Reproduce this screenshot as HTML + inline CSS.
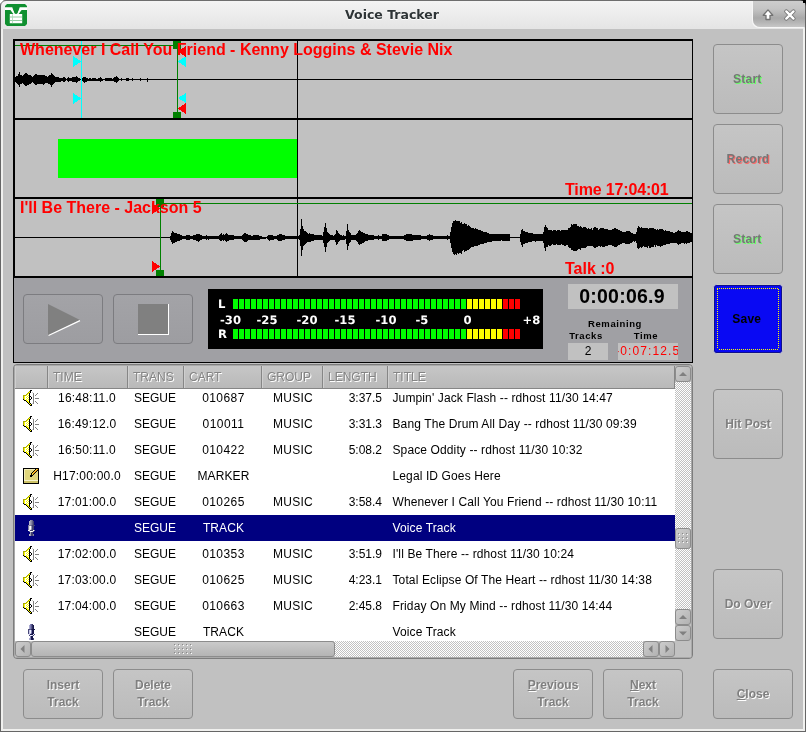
<!DOCTYPE html>
<html><head><meta charset="utf-8"><title>Voice Tracker</title>
<style>
html,body{margin:0;padding:0;}
body{width:806px;height:732px;overflow:hidden;background:#c1c1c1;position:relative;font-family:"Liberation Sans",sans-serif;}
.abs{position:absolute;}
#win{position:absolute;left:0;top:0;width:806px;height:732px;overflow:hidden;will-change:transform;}
#tbar{position:absolute;left:0;top:0;width:806px;height:29px;background:linear-gradient(#f5f5f5 0px,#f2f2f2 4px,#ececec 15px,#e5e5e5 28px);}
#tbar .topline{position:absolute;left:0;top:0;width:806px;height:1px;background:#6e6e6e;}
#ttl{position:absolute;left:0;top:6px;width:784px;text-align:center;font-family:"DejaVu Sans",sans-serif;font-weight:bold;font-size:12.5px;line-height:18px;color:#2e3436;text-shadow:0 1px 0 #fff;}
#tab{position:absolute;left:753px;top:1px;width:52px;height:26px;border-bottom-left-radius:7px;background:linear-gradient(#cdcdcd 0,#c4c4c4 8px,#a9a9a9 17px,#b4b4b4 21px,#c6c6c6 26px);box-shadow:-1px 1px 0 #f6f6f6;}
.bl{position:absolute;background:#666;}
.bw{position:absolute;background:#f0f0ee;}
.btn{position:absolute;box-sizing:border-box;border:1px solid #8c8c8c;border-radius:4px;background:linear-gradient(#c5c5c5,#bbbbbb);font-weight:bold;font-size:12px;color:#7f7f7f;text-align:center;text-shadow:1px 1px 0 #fff;}
.btn span{position:absolute;left:0;width:100%;text-align:center;line-height:14px;}
.row{position:absolute;left:15px;width:660px;height:26px;font-size:12px;line-height:26px;color:#000;white-space:nowrap;}
.row.sel{background:#000080;color:#fff;}
.row span{position:absolute;top:0;height:26px;}
.c{text-align:center;}
.hd{position:absolute;top:366px;height:23px;box-sizing:border-box;border-right:1px solid #868686;border-bottom:1px solid #868686;background:linear-gradient(#c6c6c6,#b9b9b9);font-size:12px;line-height:22px;color:#848484;text-shadow:1px 1px 0 #fff;padding-left:5px;box-shadow:inset 1px 0 0 #cfcfcf;}
.sb{position:absolute;width:16px;height:16px;box-sizing:border-box;border:1px solid #8c8c8c;border-radius:3px;background:linear-gradient(135deg,#cccccc,#b2b2b2);}
.chk{position:absolute;background-image:conic-gradient(#fff 25%,#c1c1c1 0 50%,#fff 0 75%,#c1c1c1 0);background-size:2px 2px;}
.red{position:absolute;color:#ff0000;font-weight:bold;font-size:16px;line-height:18px;white-space:nowrap;}
.lbl{position:absolute;font-weight:bold;font-size:9.5px;line-height:12px;color:#000;text-align:center;white-space:nowrap;letter-spacing:0.6px;}
</style></head>
<body>
<div id="win">
<div id="tbar"><div class="topline"></div>
<div id="tab"></div>
<div id="ttl">Voice Tracker</div>
<svg class="abs" style="left:5px;top:4px" width="22" height="22" viewBox="0 0 22 22">
<path d="M2 0H20L22 2V20L20 22H2L0 20V2Z" fill="#109030"/>
<path d="M0 3.3H7.4L10 9.6H12L14.6 3.3H22V6.1H16.6L13.6 10.1H17.2V19.2H4.8V10.1H8.4L5.4 6.1H0Z" fill="#fff"/>
<path d="M7.4 3.4H14.6L12.4 9.2Q11 10.4 9.6 9.2Z" fill="#109030"/>
<rect x="4.8" y="12.6" width="12.4" height="0.8" fill="#7cc08c"/>
<rect x="4.8" y="16" width="12.4" height="0.8" fill="#7cc08c"/>
<rect x="7.1" y="10.2" width="0.8" height="9" fill="#a8d8b4"/>
</svg>
<svg class="abs" style="left:760px;top:7px" width="40" height="16" viewBox="0 0 40 16">
<path d="M8 2.9L12.8 8.3H10V12.5H6V8.3H3.2Z" fill="#fff" stroke="#727272" stroke-width="1.3" stroke-linejoin="round"/>
<path d="M26.3 4.4L33.5 11.6M33.5 4.4L26.3 11.6" stroke="#707070" stroke-width="4.1" stroke-linecap="round" fill="none"/>
<path d="M26.3 4.4L33.5 11.6M33.5 4.4L26.3 11.6" stroke="#fff" stroke-width="2.4" stroke-linecap="round" fill="none"/>
</svg>
</div>
<div class="bl" style="left:0;top:0;width:1px;height:732px"></div>
<div class="bw" style="left:1px;top:29px;width:2px;height:702px"></div>
<div class="bl" style="left:805px;top:0;width:1px;height:732px"></div>
<div class="bw" style="left:803px;top:28px;width:2px;height:703px"></div>
<div class="bw" style="left:1px;top:729px;width:804px;height:2px"></div>
<div class="bl" style="left:0;top:731px;width:806px;height:1px"></div>
<div class="abs" style="left:0;top:0;width:3px;height:3px;background:#fff"></div>
<div class="abs" style="left:803px;top:0;width:3px;height:3px;background:#000"></div>
<svg class="abs" style="left:0;top:0" width="6" height="6"><path d="M0 6V0H6A6 6 0 0 0 0 6Z" fill="#fff"/><path d="M0.5 6A5.5 5.5 0 0 1 6 0.5" stroke="#6e6e6e" fill="none"/></svg>
<svg class="abs" style="left:800px;top:0" width="6" height="6"><path d="M6 6V0H0A6 6 0 0 1 6 6Z" fill="#000"/></svg>
<svg class="abs" style="left:0;top:0" width="806" height="370" viewBox="0 0 806 370" shape-rendering="crispEdges">
<rect x="14" y="278" width="678" height="84" fill="#a0a0a4"/>
<rect x="13" y="39" width="680" height="2" fill="#000"/>
<rect x="13" y="39" width="2" height="239" fill="#000"/>
<rect x="13" y="278" width="1" height="85" fill="#000"/>
<rect x="692" y="39" width="1" height="324" fill="#000"/>
<rect x="13" y="118" width="680" height="2" fill="#000"/>
<rect x="13" y="197" width="680" height="2" fill="#000"/>
<rect x="13" y="276" width="680" height="2" fill="#000"/>
<rect x="13" y="362" width="680" height="1" fill="#000"/>
<rect x="15" y="79" width="677" height="1" fill="#000"/>
<rect x="15" y="237" width="677" height="1" fill="#000"/>
<polygon points="15.0,76.6 16.0,76.6 16.0,75.9 17.0,75.9 17.0,75.5 18.0,75.5 18.0,74.0 19.0,74.0 19.0,72.2 20.0,72.2 20.0,74.9 21.0,74.9 21.0,75.1 22.0,75.1 22.0,75.8 23.0,75.8 23.0,74.9 24.0,74.9 24.0,74.4 25.0,74.4 25.0,73.2 26.0,73.2 26.0,72.5 27.0,72.5 27.0,74.2 28.0,74.2 28.0,74.7 29.0,74.7 29.0,75.1 30.0,75.1 30.0,74.9 31.0,74.9 31.0,75.7 32.0,75.7 32.0,76.8 33.0,76.8 33.0,75.6 34.0,75.6 34.0,75.2 35.0,75.2 35.0,74.1 36.0,74.1 36.0,74.0 37.0,74.0 37.0,74.9 38.0,74.9 38.0,75.0 39.0,75.0 39.0,75.1 40.0,75.1 40.0,75.1 41.0,75.1 41.0,75.1 42.0,75.1 42.0,74.8 43.0,74.8 43.0,74.5 44.0,74.5 44.0,74.8 45.0,74.8 45.0,75.7 46.0,75.7 46.0,76.1 47.0,76.1 47.0,76.5 48.0,76.5 48.0,75.5 49.0,75.5 49.0,75.0 50.0,75.0 50.0,74.5 51.0,74.5 51.0,72.8 52.0,72.8 52.0,73.6 53.0,73.6 53.0,75.1 54.0,75.1 54.0,76.1 55.0,76.1 55.0,76.7 56.0,76.7 56.0,76.9 57.0,76.9 57.0,77.0 58.0,77.0 58.0,77.0 59.0,77.0 59.0,77.5 60.0,77.5 60.0,77.6 61.0,77.6 61.0,77.9 62.0,77.9 62.0,77.7 63.0,77.7 63.0,77.4 64.0,77.4 64.0,76.8 65.0,76.8 65.0,77.9 66.0,77.9 66.0,78.6 67.0,78.6 67.0,77.7 68.0,77.7 68.0,77.2 69.0,77.2 69.0,77.7 70.0,77.7 70.0,78.4 71.0,78.4 71.0,78.0 72.0,78.0 72.0,77.4 73.0,77.4 73.0,77.3 74.0,77.3 74.0,77.4 75.0,77.4 75.0,76.8 76.0,76.8 76.0,76.2 77.0,76.2 77.0,76.9 78.0,76.9 78.0,77.6 79.0,77.6 79.0,78.0 80.0,78.0 80.0,78.6 81.0,78.6 81.0,78.1 82.0,78.1 82.0,77.7 83.0,77.7 83.0,76.8 84.0,76.8 84.0,76.5 85.0,76.5 85.0,77.1 86.0,77.1 86.0,77.6 87.0,77.6 87.0,78.1 88.0,78.1 88.0,78.5 89.0,78.5 89.0,78.4 90.0,78.4 90.0,78.3 91.0,78.3 91.0,78.5 92.0,78.5 92.0,78.4 93.0,78.4 93.0,78.4 94.0,78.4 94.0,78.4 95.0,78.4 95.0,78.3 96.0,78.3 96.0,78.5 97.0,78.5 97.0,78.5 98.0,78.5 98.0,78.4 99.0,78.4 99.0,78.0 100.0,78.0 100.0,77.2 101.0,77.2 101.0,77.8 102.0,77.8 102.0,78.5 103.0,78.5 103.0,78.6 104.0,78.6 104.0,78.6 105.0,78.6 105.0,78.1 106.0,78.1 106.0,78.1 107.0,78.1 107.0,77.9 108.0,77.9 108.0,77.9 109.0,77.9 109.0,77.9 110.0,77.9 110.0,78.1 111.0,78.1 111.0,78.1 112.0,78.1 112.0,78.5 113.0,78.5 113.0,78.2 114.0,78.2 114.0,77.4 115.0,77.4 115.0,77.3 116.0,77.3 116.0,76.4 117.0,76.4 117.0,77.2 118.0,77.2 118.0,78.4 119.0,78.4 119.0,78.9 120.0,78.9 120.0,78.8 121.0,78.8 121.0,78.1 122.0,78.1 122.0,78.9 123.0,78.9 123.0,78.9 124.0,78.9 124.0,78.9 125.0,78.9 125.0,78.9 126.0,78.9 126.0,78.0 127.0,78.0 127.0,77.8 128.0,77.8 128.0,78.4 129.0,78.4 129.0,78.8 130.0,78.8 130.0,78.9 131.0,78.9 131.0,78.9 132.0,78.9 132.0,78.0 133.0,78.0 133.0,78.9 134.0,78.9 134.0,78.9 135.0,78.9 135.0,78.9 136.0,78.9 136.0,78.9 137.0,78.9 137.0,78.9 138.0,78.9 138.0,78.9 139.0,78.9 139.0,78.9 140.0,78.9 140.0,78.1 141.0,78.1 141.0,78.9 142.0,78.9 142.0,78.9 143.0,78.9 143.0,79.0 144.0,79.0 144.0,78.9 145.0,78.9 145.0,78.9 146.0,78.9 146.0,78.9 147.0,78.9 147.0,77.6 148.0,77.6 148.0,78.9 149.0,78.9 149.0,79.0 150.0,79.0 150.0,80.0 149.0,80.0 149.0,80.1 148.0,80.1 148.0,81.5 147.0,81.5 147.0,80.1 146.0,80.1 146.0,80.1 145.0,80.1 145.0,80.1 144.0,80.1 144.0,80.1 143.0,80.1 143.0,80.1 142.0,80.1 142.0,80.1 141.0,80.1 141.0,80.9 140.0,80.9 140.0,80.1 139.0,80.1 139.0,80.1 138.0,80.1 138.0,80.1 137.0,80.1 137.0,80.1 136.0,80.1 136.0,80.1 135.0,80.1 135.0,80.1 134.0,80.1 134.0,80.1 133.0,80.1 133.0,80.9 132.0,80.9 132.0,80.1 131.0,80.1 131.0,80.1 130.0,80.1 130.0,80.2 129.0,80.2 129.0,80.6 128.0,80.6 128.0,81.3 127.0,81.3 127.0,81.1 126.0,81.1 126.0,80.1 125.0,80.1 125.0,80.2 124.0,80.2 124.0,80.0 123.0,80.0 123.0,80.1 122.0,80.1 122.0,80.9 121.0,80.9 121.0,80.1 120.0,80.1 120.0,80.1 119.0,80.1 119.0,80.7 118.0,80.7 118.0,81.8 117.0,81.8 117.0,82.7 116.0,82.7 116.0,81.8 115.0,81.8 115.0,81.6 114.0,81.6 114.0,80.8 113.0,80.8 113.0,80.6 112.0,80.6 112.0,80.9 111.0,80.9 111.0,80.9 110.0,80.9 110.0,81.1 109.0,81.1 109.0,81.2 108.0,81.2 108.0,81.1 107.0,81.1 107.0,81.0 106.0,81.0 106.0,80.8 105.0,80.8 105.0,80.3 104.0,80.3 104.0,80.4 103.0,80.4 103.0,80.5 102.0,80.5 102.0,81.3 101.0,81.3 101.0,82.0 100.0,82.0 100.0,81.0 99.0,81.0 99.0,80.6 98.0,80.6 98.0,80.6 97.0,80.6 97.0,80.5 96.0,80.5 96.0,80.7 95.0,80.7 95.0,80.7 94.0,80.7 94.0,80.6 93.0,80.6 93.0,80.6 92.0,80.6 92.0,80.5 91.0,80.5 91.0,80.6 90.0,80.6 90.0,80.5 89.0,80.5 89.0,80.5 88.0,80.5 88.0,80.9 87.0,80.9 87.0,81.5 86.0,81.5 86.0,81.8 85.0,81.8 85.0,82.5 84.0,82.5 84.0,82.1 83.0,82.1 83.0,81.4 82.0,81.4 82.0,80.9 81.0,80.9 81.0,80.4 80.0,80.4 80.0,80.9 79.0,80.9 79.0,81.3 78.0,81.3 78.0,81.9 77.0,81.9 77.0,82.9 76.0,82.9 76.0,82.2 75.0,82.2 75.0,81.7 74.0,81.7 74.0,81.7 73.0,81.7 73.0,81.5 72.0,81.5 72.0,81.0 71.0,81.0 71.0,80.6 70.0,80.6 70.0,81.3 69.0,81.3 69.0,81.8 68.0,81.8 68.0,81.3 67.0,81.3 67.0,80.4 66.0,80.4 66.0,81.1 65.0,81.1 65.0,82.1 64.0,82.1 64.0,81.7 63.0,81.7 63.0,81.2 62.0,81.2 62.0,81.2 61.0,81.2 61.0,81.5 60.0,81.5 60.0,81.5 59.0,81.5 59.0,82.1 58.0,82.1 58.0,82.0 57.0,82.0 57.0,82.2 56.0,82.2 56.0,82.2 55.0,82.2 55.0,82.9 54.0,82.9 54.0,84.0 53.0,84.0 53.0,85.2 52.0,85.2 52.0,86.5 51.0,86.5 51.0,84.6 50.0,84.6 50.0,84.1 49.0,84.1 49.0,83.7 48.0,83.7 48.0,82.5 47.0,82.5 47.0,82.9 46.0,82.9 46.0,83.2 45.0,83.2 45.0,84.3 44.0,84.3 44.0,84.6 43.0,84.6 43.0,84.1 42.0,84.1 42.0,84.0 41.0,84.0 41.0,83.7 40.0,83.7 40.0,83.9 39.0,83.9 39.0,84.2 38.0,84.2 38.0,84.1 37.0,84.1 37.0,85.1 36.0,85.1 36.0,84.8 35.0,84.8 35.0,83.9 34.0,83.9 34.0,83.4 33.0,83.4 33.0,82.2 32.0,82.2 32.0,83.1 31.0,83.1 31.0,84.1 30.0,84.1 30.0,84.0 29.0,84.0 29.0,84.5 28.0,84.5 28.0,84.6 27.0,84.6 27.0,86.3 26.0,86.3 26.0,85.5 25.0,85.5 25.0,84.5 24.0,84.5 24.0,84.3 23.0,84.3 23.0,83.1 22.0,83.1 22.0,84.1 21.0,84.1 21.0,83.9 20.0,83.9 20.0,86.7 19.0,86.7 19.0,85.0 18.0,85.0 18.0,83.5 17.0,83.5 17.0,83.0 16.0,83.0 16.0,82.3 15.0,82.3" fill="#000"/>
<polygon points="169.0,237.0 170.0,237.0 170.0,235.5 171.0,235.5 171.0,233.0 172.0,233.0 172.0,230.9 173.0,230.9 173.0,231.7 174.0,231.7 174.0,232.5 175.0,232.5 175.0,233.0 176.0,233.0 176.0,233.4 177.0,233.4 177.0,233.7 178.0,233.7 178.0,234.3 179.0,234.3 179.0,234.3 180.0,234.3 180.0,234.7 181.0,234.7 181.0,235.1 182.0,235.1 182.0,235.6 183.0,235.6 183.0,235.7 184.0,235.7 184.0,236.1 185.0,236.1 185.0,235.7 186.0,235.7 186.0,235.4 187.0,235.4 187.0,235.3 188.0,235.3 188.0,234.9 189.0,234.9 189.0,235.0 190.0,235.0 190.0,235.6 191.0,235.6 191.0,235.7 192.0,235.7 192.0,236.1 193.0,236.1 193.0,235.4 194.0,235.4 194.0,235.0 195.0,235.0 195.0,234.7 196.0,234.7 196.0,233.9 197.0,233.9 197.0,233.7 198.0,233.7 198.0,233.6 199.0,233.6 199.0,234.2 200.0,234.2 200.0,234.8 201.0,234.8 201.0,235.4 202.0,235.4 202.0,235.8 203.0,235.8 203.0,236.2 204.0,236.2 204.0,236.4 205.0,236.4 205.0,236.3 206.0,236.3 206.0,235.4 207.0,235.4 207.0,236.3 208.0,236.3 208.0,235.6 209.0,235.6 209.0,236.3 210.0,236.3 210.0,236.4 211.0,236.4 211.0,236.4 212.0,236.4 212.0,236.3 213.0,236.3 213.0,236.3 214.0,236.3 214.0,236.3 215.0,236.3 215.0,236.3 216.0,236.3 216.0,236.4 217.0,236.4 217.0,236.4 218.0,236.4 218.0,236.3 219.0,236.3 219.0,234.9 220.0,234.9 220.0,234.1 221.0,234.1 221.0,233.4 222.0,233.4 222.0,234.6 223.0,234.6 223.0,234.4 224.0,234.4 224.0,234.6 225.0,234.6 225.0,233.8 226.0,233.8 226.0,233.3 227.0,233.3 227.0,234.0 228.0,234.0 228.0,234.5 229.0,234.5 229.0,234.8 230.0,234.8 230.0,235.3 231.0,235.3 231.0,235.0 232.0,235.0 232.0,234.9 233.0,234.9 233.0,235.3 234.0,235.3 234.0,235.6 235.0,235.6 235.0,235.9 236.0,235.9 236.0,236.3 237.0,236.3 237.0,236.1 238.0,236.1 238.0,236.2 239.0,236.2 239.0,236.2 240.0,236.2 240.0,236.3 241.0,236.3 241.0,235.7 242.0,235.7 242.0,234.8 243.0,234.8 243.0,233.9 244.0,233.9 244.0,232.6 245.0,232.6 245.0,233.3 246.0,233.3 246.0,233.5 247.0,233.5 247.0,234.1 248.0,234.1 248.0,234.7 249.0,234.7 249.0,235.0 250.0,235.0 250.0,235.4 251.0,235.4 251.0,235.5 252.0,235.5 252.0,235.5 253.0,235.5 253.0,235.1 254.0,235.1 254.0,234.8 255.0,234.8 255.0,235.2 256.0,235.2 256.0,235.4 257.0,235.4 257.0,235.3 258.0,235.3 258.0,235.4 259.0,235.4 259.0,235.5 260.0,235.5 260.0,236.0 261.0,236.0 261.0,236.3 262.0,236.3 262.0,236.5 263.0,236.5 263.0,236.5 264.0,236.5 264.0,236.5 265.0,236.5 265.0,236.5 266.0,236.5 266.0,236.5 267.0,236.5 267.0,235.6 268.0,235.6 268.0,235.1 269.0,235.1 269.0,234.5 270.0,234.5 270.0,234.7 271.0,234.7 271.0,235.0 272.0,235.0 272.0,235.2 273.0,235.2 273.0,235.5 274.0,235.5 274.0,235.9 275.0,235.9 275.0,236.3 276.0,236.3 276.0,236.0 277.0,236.0 277.0,235.4 278.0,235.4 278.0,234.7 279.0,234.7 279.0,234.0 280.0,234.0 280.0,234.3 281.0,234.3 281.0,234.4 282.0,234.4 282.0,234.6 283.0,234.6 283.0,235.0 284.0,235.0 284.0,235.1 285.0,235.1 285.0,235.5 286.0,235.5 286.0,235.8 287.0,235.8 287.0,235.9 288.0,235.9 288.0,236.0 289.0,236.0 289.0,236.1 290.0,236.1 290.0,236.2 291.0,236.2 291.0,236.1 292.0,236.1 292.0,236.1 293.0,236.1 293.0,236.3 294.0,236.3 294.0,236.1 295.0,236.1 295.0,236.2 296.0,236.2 296.0,236.3 297.0,236.3 297.0,236.3 298.0,236.3 298.0,235.9 299.0,235.9 299.0,235.4 300.0,235.4 300.0,229.1 301.0,229.1 301.0,219.1 302.0,219.1 302.0,226.0 303.0,226.0 303.0,228.5 304.0,228.5 304.0,230.5 305.0,230.5 305.0,231.0 306.0,231.0 306.0,232.3 307.0,232.3 307.0,232.8 308.0,232.8 308.0,233.6 309.0,233.6 309.0,233.3 310.0,233.3 310.0,233.5 311.0,233.5 311.0,233.8 312.0,233.8 312.0,234.2 313.0,234.2 313.0,234.1 314.0,234.1 314.0,234.6 315.0,234.6 315.0,234.8 316.0,234.8 316.0,235.0 317.0,235.0 317.0,235.2 318.0,235.2 318.0,235.4 319.0,235.4 319.0,235.3 320.0,235.3 320.0,235.4 321.0,235.4 321.0,235.3 322.0,235.3 322.0,235.5 323.0,235.5 323.0,232.2 324.0,232.2 324.0,227.2 325.0,227.2 325.0,222.5 326.0,222.5 326.0,228.2 327.0,228.2 327.0,231.7 328.0,231.7 328.0,233.3 329.0,233.3 329.0,234.3 330.0,234.3 330.0,235.1 331.0,235.1 331.0,235.0 332.0,235.0 332.0,235.3 333.0,235.3 333.0,235.5 334.0,235.5 334.0,234.6 335.0,234.6 335.0,233.7 336.0,233.7 336.0,230.0 337.0,230.0 337.0,231.2 338.0,231.2 338.0,233.0 339.0,233.0 339.0,233.9 340.0,233.9 340.0,234.6 341.0,234.6 341.0,235.1 342.0,235.1 342.0,235.5 343.0,235.5 343.0,235.4 344.0,235.4 344.0,235.5 345.0,235.5 345.0,235.5 346.0,235.5 346.0,230.9 347.0,230.9 347.0,224.2 348.0,224.2 348.0,229.5 349.0,229.5 349.0,231.7 350.0,231.7 350.0,233.4 351.0,233.4 351.0,234.5 352.0,234.5 352.0,234.8 353.0,234.8 353.0,235.4 354.0,235.4 354.0,235.4 355.0,235.4 355.0,234.9 356.0,234.9 356.0,234.0 357.0,234.0 357.0,233.1 358.0,233.1 358.0,231.2 359.0,231.2 359.0,229.5 360.0,229.5 360.0,231.1 361.0,231.1 361.0,231.5 362.0,231.5 362.0,231.8 363.0,231.8 363.0,232.6 364.0,232.6 364.0,233.3 365.0,233.3 365.0,234.1 366.0,234.1 366.0,234.2 367.0,234.2 367.0,234.2 368.0,234.2 368.0,234.7 369.0,234.7 369.0,234.6 370.0,234.6 370.0,235.0 371.0,235.0 371.0,235.0 372.0,235.0 372.0,235.2 373.0,235.2 373.0,235.3 374.0,235.3 374.0,235.6 375.0,235.6 375.0,235.8 376.0,235.8 376.0,236.2 377.0,236.2 377.0,236.3 378.0,236.3 378.0,235.2 379.0,235.2 379.0,236.3 380.0,236.3 380.0,236.2 381.0,236.2 381.0,236.0 382.0,236.0 382.0,234.4 383.0,234.4 383.0,234.3 384.0,234.3 384.0,234.0 385.0,234.0 385.0,234.1 386.0,234.1 386.0,234.4 387.0,234.4 387.0,234.9 388.0,234.9 388.0,235.2 389.0,235.2 389.0,235.6 390.0,235.6 390.0,236.2 391.0,236.2 391.0,236.2 392.0,236.2 392.0,236.2 393.0,236.2 393.0,236.3 394.0,236.3 394.0,236.3 395.0,236.3 395.0,236.4 396.0,236.4 396.0,236.3 397.0,236.3 397.0,236.4 398.0,236.4 398.0,236.4 399.0,236.4 399.0,236.2 400.0,236.2 400.0,236.3 401.0,236.3 401.0,236.2 402.0,236.2 402.0,236.4 403.0,236.4 403.0,235.6 404.0,235.6 404.0,234.9 405.0,234.9 405.0,234.5 406.0,234.5 406.0,234.1 407.0,234.1 407.0,234.3 408.0,234.3 408.0,234.3 409.0,234.3 409.0,234.1 410.0,234.1 410.0,234.2 411.0,234.2 411.0,234.1 412.0,234.1 412.0,234.5 413.0,234.5 413.0,234.7 414.0,234.7 414.0,235.1 415.0,235.1 415.0,234.8 416.0,234.8 416.0,234.9 417.0,234.9 417.0,234.6 418.0,234.6 418.0,234.7 419.0,234.7 419.0,234.7 420.0,234.7 420.0,235.2 421.0,235.2 421.0,235.6 422.0,235.6 422.0,235.8 423.0,235.8 423.0,236.0 424.0,236.0 424.0,236.0 425.0,236.0 425.0,236.1 426.0,236.1 426.0,235.9 427.0,235.9 427.0,235.3 428.0,235.3 428.0,235.0 429.0,235.0 429.0,234.1 430.0,234.1 430.0,234.6 431.0,234.6 431.0,234.9 432.0,234.9 432.0,235.3 433.0,235.3 433.0,235.9 434.0,235.9 434.0,236.1 435.0,236.1 435.0,236.3 436.0,236.3 436.0,236.3 437.0,236.3 437.0,236.3 438.0,236.3 438.0,236.4 439.0,236.4 439.0,236.3 440.0,236.3 440.0,236.4 441.0,236.4 441.0,236.3 442.0,236.3 442.0,236.2 443.0,236.2 443.0,236.3 444.0,236.3 444.0,236.4 445.0,236.4 445.0,236.1 446.0,236.1 446.0,236.1 447.0,236.1 447.0,235.3 448.0,235.3 448.0,236.1 449.0,236.1 449.0,235.9 450.0,235.9 450.0,232.3 451.0,232.3 451.0,227.4 452.0,227.4 452.0,223.0 453.0,223.0 453.0,221.1 454.0,221.1 454.0,220.8 455.0,220.8 455.0,220.3 456.0,220.3 456.0,221.2 457.0,221.2 457.0,221.2 458.0,221.2 458.0,220.8 459.0,220.8 459.0,220.9 460.0,220.9 460.0,222.6 461.0,222.6 461.0,222.1 462.0,222.1 462.0,224.1 463.0,224.1 463.0,224.2 464.0,224.2 464.0,223.1 465.0,223.1 465.0,223.7 466.0,223.7 466.0,224.4 467.0,224.4 467.0,225.7 468.0,225.7 468.0,224.9 469.0,224.9 469.0,225.8 470.0,225.8 470.0,226.9 471.0,226.9 471.0,227.5 472.0,227.5 472.0,227.8 473.0,227.8 473.0,227.6 474.0,227.6 474.0,228.8 475.0,228.8 475.0,228.3 476.0,228.3 476.0,229.1 477.0,229.1 477.0,229.0 478.0,229.0 478.0,230.2 479.0,230.2 479.0,230.2 480.0,230.2 480.0,230.4 481.0,230.4 481.0,231.2 482.0,231.2 482.0,231.3 483.0,231.3 483.0,231.7 484.0,231.7 484.0,232.0 485.0,232.0 485.0,232.3 486.0,232.3 486.0,232.2 487.0,232.2 487.0,232.8 488.0,232.8 488.0,232.8 489.0,232.8 489.0,233.5 490.0,233.5 490.0,233.5 491.0,233.5 491.0,233.7 492.0,233.7 492.0,233.7 493.0,233.7 493.0,234.1 494.0,234.1 494.0,233.8 495.0,233.8 495.0,234.2 496.0,234.2 496.0,234.1 497.0,234.1 497.0,234.3 498.0,234.3 498.0,234.2 499.0,234.2 499.0,234.4 500.0,234.4 500.0,234.2 501.0,234.2 501.0,234.4 502.0,234.4 502.0,234.1 503.0,234.1 503.0,234.3 504.0,234.3 504.0,234.1 505.0,234.1 505.0,234.1 506.0,234.1 506.0,234.2 507.0,234.2 507.0,234.2 508.0,234.2 508.0,234.3 509.0,234.3 509.0,234.2 510.0,234.2 510.0,236.8 511.0,236.8 511.0,236.8 512.0,236.8 512.0,236.8 513.0,236.8 513.0,236.8 514.0,236.8 514.0,236.8 515.0,236.8 515.0,236.8 516.0,236.8 516.0,236.8 517.0,236.8 517.0,236.8 518.0,236.8 518.0,236.8 519.0,236.8 519.0,236.8 520.0,236.8 520.0,233.5 521.0,233.5 521.0,229.6 522.0,229.6 522.0,228.6 523.0,228.6 523.0,230.5 524.0,230.5 524.0,230.8 525.0,230.8 525.0,231.5 526.0,231.5 526.0,231.9 527.0,231.9 527.0,232.4 528.0,232.4 528.0,232.8 529.0,232.8 529.0,232.8 530.0,232.8 530.0,232.9 531.0,232.9 531.0,233.2 532.0,233.2 532.0,233.4 533.0,233.4 533.0,233.6 534.0,233.6 534.0,233.5 535.0,233.5 535.0,233.7 536.0,233.7 536.0,233.9 537.0,233.9 537.0,234.3 538.0,234.3 538.0,234.3 539.0,234.3 539.0,234.2 540.0,234.2 540.0,234.4 541.0,234.4 541.0,234.4 542.0,234.4 542.0,233.8 543.0,233.8 543.0,232.2 544.0,232.2 544.0,227.1 545.0,227.1 545.0,225.0 546.0,225.0 546.0,227.4 547.0,227.4 547.0,228.0 548.0,228.0 548.0,229.6 549.0,229.6 549.0,229.8 550.0,229.8 550.0,229.5 551.0,229.5 551.0,230.4 552.0,230.4 552.0,230.6 553.0,230.6 553.0,230.2 554.0,230.2 554.0,230.0 555.0,230.0 555.0,230.4 556.0,230.4 556.0,230.9 557.0,230.9 557.0,230.4 558.0,230.4 558.0,230.2 559.0,230.2 559.0,230.0 560.0,230.0 560.0,230.6 561.0,230.6 561.0,230.4 562.0,230.4 562.0,230.0 563.0,230.0 563.0,229.8 564.0,229.8 564.0,229.9 565.0,229.9 565.0,229.6 566.0,229.6 566.0,229.5 567.0,229.5 567.0,229.6 568.0,229.6 568.0,228.1 569.0,228.1 569.0,227.5 570.0,227.5 570.0,226.6 571.0,226.6 571.0,224.2 572.0,224.2 572.0,224.6 573.0,224.6 573.0,223.5 574.0,223.5 574.0,223.9 575.0,223.9 575.0,223.8 576.0,223.8 576.0,224.2 577.0,224.2 577.0,225.5 578.0,225.5 578.0,225.8 579.0,225.8 579.0,226.5 580.0,226.5 580.0,225.7 581.0,225.7 581.0,226.7 582.0,226.7 582.0,227.5 583.0,227.5 583.0,227.0 584.0,227.0 584.0,227.1 585.0,227.1 585.0,226.9 586.0,226.9 586.0,228.1 587.0,228.1 587.0,228.6 588.0,228.6 588.0,228.3 589.0,228.3 589.0,229.0 590.0,229.0 590.0,229.3 591.0,229.3 591.0,228.3 592.0,228.3 592.0,229.5 593.0,229.5 593.0,228.3 594.0,228.3 594.0,227.1 595.0,227.1 595.0,226.6 596.0,226.6 596.0,228.1 597.0,228.1 597.0,228.4 598.0,228.4 598.0,229.6 599.0,229.6 599.0,229.0 600.0,229.0 600.0,228.4 601.0,228.4 601.0,228.4 602.0,228.4 602.0,227.7 603.0,227.7 603.0,228.3 604.0,228.3 604.0,228.7 605.0,228.7 605.0,228.9 606.0,228.9 606.0,229.4 607.0,229.4 607.0,229.4 608.0,229.4 608.0,230.1 609.0,230.1 609.0,229.6 610.0,229.6 610.0,229.9 611.0,229.9 611.0,230.1 612.0,230.1 612.0,229.2 613.0,229.2 613.0,228.7 614.0,228.7 614.0,228.0 615.0,228.0 615.0,228.3 616.0,228.3 616.0,228.5 617.0,228.5 617.0,229.3 618.0,229.3 618.0,230.0 619.0,230.0 619.0,230.2 620.0,230.2 620.0,231.0 621.0,231.0 621.0,231.2 622.0,231.2 622.0,231.8 623.0,231.8 623.0,232.2 624.0,232.2 624.0,231.9 625.0,231.9 625.0,231.6 626.0,231.6 626.0,230.9 627.0,230.9 627.0,230.8 628.0,230.8 628.0,230.7 629.0,230.7 629.0,231.3 630.0,231.3 630.0,232.3 631.0,232.3 631.0,232.6 632.0,232.6 632.0,232.8 633.0,232.8 633.0,233.7 634.0,233.7 634.0,233.5 635.0,233.5 635.0,234.1 636.0,234.1 636.0,231.8 637.0,231.8 637.0,227.5 638.0,227.5 638.0,226.3 639.0,226.3 639.0,226.6 640.0,226.6 640.0,227.6 641.0,227.6 641.0,226.9 642.0,226.9 642.0,227.7 643.0,227.7 643.0,228.4 644.0,228.4 644.0,228.2 645.0,228.2 645.0,228.3 646.0,228.3 646.0,227.7 647.0,227.7 647.0,227.6 648.0,227.6 648.0,228.5 649.0,228.5 649.0,227.7 650.0,227.7 650.0,227.5 651.0,227.5 651.0,227.7 652.0,227.7 652.0,227.8 653.0,227.8 653.0,228.1 654.0,228.1 654.0,229.3 655.0,229.3 655.0,228.6 656.0,228.6 656.0,229.6 657.0,229.6 657.0,229.0 658.0,229.0 658.0,229.5 659.0,229.5 659.0,228.9 660.0,228.9 660.0,228.6 661.0,228.6 661.0,229.2 662.0,229.2 662.0,229.3 663.0,229.3 663.0,230.3 664.0,230.3 664.0,230.6 665.0,230.6 665.0,230.3 666.0,230.3 666.0,230.6 667.0,230.6 667.0,231.1 668.0,231.1 668.0,231.0 669.0,231.0 669.0,231.2 670.0,231.2 670.0,231.9 671.0,231.9 671.0,231.6 672.0,231.6 672.0,232.2 673.0,232.2 673.0,232.5 674.0,232.5 674.0,232.5 675.0,232.5 675.0,231.8 676.0,231.8 676.0,231.6 677.0,231.6 677.0,231.2 678.0,231.2 678.0,230.1 679.0,230.1 679.0,231.2 680.0,231.2 680.0,231.3 681.0,231.3 681.0,232.3 682.0,232.3 682.0,232.2 683.0,232.2 683.0,232.4 684.0,232.4 684.0,231.7 685.0,231.7 685.0,231.7 686.0,231.7 686.0,231.1 687.0,231.1 687.0,231.4 688.0,231.4 688.0,232.0 689.0,232.0 689.0,231.8 690.0,231.8 690.0,232.8 691.0,232.8 691.0,232.8 692.0,232.8 692.0,242.2 691.0,242.2 691.0,242.4 690.0,242.4 690.0,243.3 689.0,243.3 689.0,242.8 688.0,242.8 688.0,243.4 687.0,243.4 687.0,243.8 686.0,243.8 686.0,243.1 685.0,243.1 685.0,243.5 684.0,243.5 684.0,242.5 683.0,242.5 683.0,242.6 682.0,242.6 682.0,242.7 681.0,242.7 681.0,243.8 680.0,243.8 680.0,243.8 679.0,243.8 679.0,245.0 678.0,245.0 678.0,244.0 677.0,244.0 677.0,243.3 676.0,243.3 676.0,243.3 675.0,243.3 675.0,242.6 674.0,242.6 674.0,242.5 673.0,242.5 673.0,243.0 672.0,243.0 672.0,243.4 671.0,243.4 671.0,242.9 670.0,242.9 670.0,243.5 669.0,243.5 669.0,243.8 668.0,243.8 668.0,243.8 667.0,243.8 667.0,244.3 666.0,244.3 666.0,244.9 665.0,244.9 665.0,244.6 664.0,244.6 664.0,244.8 663.0,244.8 663.0,245.7 662.0,245.7 662.0,245.6 661.0,245.6 661.0,246.8 660.0,246.8 660.0,246.4 659.0,246.4 659.0,245.5 658.0,245.5 658.0,246.2 657.0,246.2 657.0,245.4 656.0,245.4 656.0,246.8 655.0,246.8 655.0,245.4 654.0,245.4 654.0,246.6 653.0,246.6 653.0,246.8 652.0,246.8 652.0,247.0 651.0,247.0 651.0,247.7 650.0,247.7 650.0,247.6 649.0,247.6 649.0,246.4 648.0,246.4 648.0,247.5 647.0,247.5 647.0,247.3 646.0,247.3 646.0,246.6 645.0,246.6 645.0,247.0 644.0,247.0 644.0,246.4 643.0,246.4 643.0,247.2 642.0,247.2 642.0,247.8 641.0,247.8 641.0,247.0 640.0,247.0 640.0,248.2 639.0,248.2 639.0,249.1 638.0,249.1 638.0,247.8 637.0,247.8 637.0,242.9 636.0,242.9 636.0,240.8 635.0,240.8 635.0,241.7 634.0,241.7 634.0,241.4 633.0,241.4 633.0,242.4 632.0,242.4 632.0,242.6 631.0,242.6 631.0,242.7 630.0,242.7 630.0,243.8 629.0,243.8 629.0,244.4 628.0,244.4 628.0,243.9 627.0,243.9 627.0,243.8 626.0,243.8 626.0,243.6 625.0,243.6 625.0,242.8 624.0,242.8 624.0,243.0 623.0,243.0 623.0,243.3 622.0,243.3 622.0,243.7 621.0,243.7 621.0,244.2 620.0,244.2 620.0,245.0 619.0,245.0 619.0,245.3 618.0,245.3 618.0,246.1 617.0,246.1 617.0,246.6 616.0,246.6 616.0,247.1 615.0,247.1 615.0,246.9 614.0,246.9 614.0,246.1 613.0,246.1 613.0,246.2 612.0,246.2 612.0,244.7 611.0,244.7 611.0,244.7 610.0,244.7 610.0,245.2 609.0,245.2 609.0,245.0 608.0,245.0 608.0,245.6 607.0,245.6 607.0,245.6 606.0,245.6 606.0,245.9 605.0,245.9 605.0,246.6 604.0,246.6 604.0,246.9 603.0,246.9 603.0,246.9 602.0,246.9 602.0,246.3 601.0,246.3 601.0,246.6 600.0,246.6 600.0,246.0 599.0,246.0 599.0,245.7 598.0,245.7 598.0,246.8 597.0,246.8 597.0,247.2 596.0,247.2 596.0,248.2 595.0,248.2 595.0,247.6 594.0,247.6 594.0,246.8 593.0,246.8 593.0,245.6 592.0,245.6 592.0,246.3 591.0,246.3 591.0,245.8 590.0,245.8 590.0,246.3 589.0,246.3 589.0,246.4 588.0,246.4 588.0,246.4 587.0,246.4 587.0,247.3 586.0,247.3 586.0,248.3 585.0,248.3 585.0,247.8 584.0,247.8 584.0,247.9 583.0,247.9 583.0,247.6 582.0,247.6 582.0,248.0 581.0,248.0 581.0,249.6 580.0,249.6 580.0,248.7 579.0,248.7 579.0,248.8 578.0,248.8 578.0,250.0 577.0,250.0 577.0,250.7 576.0,250.7 576.0,250.8 575.0,250.8 575.0,251.2 574.0,251.2 574.0,251.3 573.0,251.3 573.0,250.2 572.0,250.2 572.0,250.1 571.0,250.1 571.0,248.1 570.0,248.1 570.0,247.9 569.0,247.9 569.0,246.8 568.0,246.8 568.0,245.2 567.0,245.2 567.0,245.1 566.0,245.1 566.0,245.6 565.0,245.6 565.0,245.5 564.0,245.5 564.0,245.0 563.0,245.0 563.0,244.7 562.0,244.7 562.0,244.3 561.0,244.3 561.0,244.5 560.0,244.5 560.0,245.0 559.0,245.0 559.0,244.6 558.0,244.6 558.0,244.6 557.0,244.6 557.0,244.4 556.0,244.4 556.0,244.8 555.0,244.8 555.0,245.0 554.0,245.0 554.0,244.7 553.0,244.7 553.0,244.4 552.0,244.4 552.0,244.8 551.0,244.8 551.0,245.8 550.0,245.8 550.0,245.6 549.0,245.6 549.0,245.2 548.0,245.2 548.0,246.8 547.0,246.8 547.0,247.3 546.0,247.3 546.0,250.5 545.0,250.5 545.0,247.6 544.0,247.6 544.0,242.7 543.0,242.7 543.0,241.1 542.0,241.1 542.0,240.6 541.0,240.6 541.0,240.8 540.0,240.8 540.0,240.7 539.0,240.7 539.0,240.8 538.0,240.8 538.0,240.8 537.0,240.8 537.0,241.2 536.0,241.2 536.0,241.5 535.0,241.5 535.0,241.4 534.0,241.4 534.0,241.4 533.0,241.4 533.0,241.4 532.0,241.4 532.0,242.0 531.0,242.0 531.0,241.9 530.0,241.9 530.0,242.0 529.0,242.0 529.0,242.2 528.0,242.2 528.0,242.5 527.0,242.5 527.0,242.9 526.0,242.9 526.0,243.3 525.0,243.3 525.0,244.4 524.0,244.4 524.0,244.3 523.0,244.3 523.0,246.5 522.0,246.5 522.0,245.4 521.0,245.4 521.0,241.5 520.0,241.5 520.0,238.2 519.0,238.2 519.0,238.2 518.0,238.2 518.0,238.2 517.0,238.2 517.0,238.2 516.0,238.2 516.0,238.2 515.0,238.2 515.0,238.2 514.0,238.2 514.0,238.3 513.0,238.3 513.0,238.1 512.0,238.1 512.0,238.2 511.0,238.2 511.0,238.2 510.0,238.2 510.0,240.7 509.0,240.7 509.0,240.8 508.0,240.8 508.0,240.7 507.0,240.7 507.0,240.7 506.0,240.7 506.0,240.9 505.0,240.9 505.0,240.9 504.0,240.9 504.0,240.5 503.0,240.5 503.0,241.1 502.0,241.1 502.0,240.4 501.0,240.4 501.0,241.0 500.0,241.0 500.0,240.6 499.0,240.6 499.0,241.0 498.0,241.0 498.0,240.6 497.0,240.6 497.0,240.9 496.0,240.9 496.0,240.8 495.0,240.8 495.0,241.3 494.0,241.3 494.0,241.0 493.0,241.0 493.0,241.2 492.0,241.2 492.0,241.5 491.0,241.5 491.0,241.6 490.0,241.6 490.0,241.6 489.0,241.6 489.0,242.0 488.0,242.0 488.0,242.1 487.0,242.1 487.0,243.1 486.0,243.1 486.0,242.7 485.0,242.7 485.0,243.0 484.0,243.0 484.0,243.5 483.0,243.5 483.0,243.6 482.0,243.6 482.0,243.9 481.0,243.9 481.0,244.3 480.0,244.3 480.0,244.8 479.0,244.8 479.0,244.5 478.0,244.5 478.0,246.1 477.0,246.1 477.0,245.6 476.0,245.6 476.0,246.4 475.0,246.4 475.0,246.0 474.0,246.0 474.0,247.1 473.0,247.1 473.0,247.3 472.0,247.3 472.0,247.2 471.0,247.2 471.0,247.9 470.0,247.9 470.0,249.3 469.0,249.3 469.0,249.6 468.0,249.6 468.0,249.6 467.0,249.6 467.0,250.6 466.0,250.6 466.0,251.1 465.0,251.1 465.0,252.0 464.0,252.0 464.0,250.3 463.0,250.3 463.0,250.6 462.0,250.6 462.0,253.5 461.0,253.5 461.0,252.9 460.0,252.9 460.0,253.4 459.0,253.4 459.0,254.4 458.0,254.4 458.0,253.3 457.0,253.3 457.0,254.6 456.0,254.6 456.0,254.4 455.0,254.4 455.0,254.8 454.0,254.8 454.0,253.5 453.0,253.5 453.0,251.5 452.0,251.5 452.0,247.5 451.0,247.5 451.0,242.6 450.0,242.6 450.0,239.1 449.0,239.1 449.0,239.0 448.0,239.0 448.0,239.8 447.0,239.8 447.0,238.9 446.0,238.9 446.0,238.9 445.0,238.9 445.0,238.6 444.0,238.6 444.0,238.6 443.0,238.6 443.0,238.8 442.0,238.8 442.0,238.7 441.0,238.7 441.0,238.6 440.0,238.6 440.0,238.6 439.0,238.6 439.0,238.7 438.0,238.7 438.0,238.7 437.0,238.7 437.0,238.7 436.0,238.7 436.0,238.7 435.0,238.7 435.0,238.9 434.0,238.9 434.0,239.1 433.0,239.1 433.0,239.6 432.0,239.6 432.0,240.1 431.0,240.1 431.0,240.3 430.0,240.3 430.0,241.1 429.0,241.1 429.0,240.0 428.0,240.0 428.0,239.6 427.0,239.6 427.0,239.1 426.0,239.1 426.0,239.0 425.0,239.0 425.0,239.0 424.0,239.0 424.0,239.1 423.0,239.1 423.0,239.2 422.0,239.2 422.0,239.3 421.0,239.3 421.0,239.9 420.0,239.9 420.0,240.2 419.0,240.2 419.0,240.2 418.0,240.2 418.0,240.3 417.0,240.3 417.0,240.1 416.0,240.1 416.0,240.1 415.0,240.1 415.0,239.9 414.0,239.9 414.0,240.4 413.0,240.4 413.0,240.5 412.0,240.5 412.0,240.9 411.0,240.9 411.0,240.9 410.0,240.9 410.0,240.8 409.0,240.8 409.0,240.6 408.0,240.6 408.0,240.7 407.0,240.7 407.0,240.8 406.0,240.8 406.0,240.4 405.0,240.4 405.0,240.0 404.0,240.0 404.0,239.3 403.0,239.3 403.0,238.7 402.0,238.7 402.0,238.8 401.0,238.8 401.0,238.8 400.0,238.8 400.0,238.8 399.0,238.8 399.0,238.6 398.0,238.6 398.0,238.6 397.0,238.6 397.0,238.7 396.0,238.7 396.0,238.6 395.0,238.6 395.0,238.8 394.0,238.8 394.0,238.6 393.0,238.6 393.0,238.7 392.0,238.7 392.0,238.9 391.0,238.9 391.0,238.9 390.0,238.9 390.0,239.3 389.0,239.3 389.0,239.8 388.0,239.8 388.0,240.0 387.0,240.0 387.0,240.7 386.0,240.7 386.0,240.8 385.0,240.8 385.0,241.0 384.0,241.0 384.0,240.5 383.0,240.5 383.0,240.7 382.0,240.7 382.0,238.9 381.0,238.9 381.0,238.9 380.0,238.9 380.0,238.6 379.0,238.6 379.0,239.9 378.0,239.9 378.0,238.6 377.0,238.6 377.0,238.8 376.0,238.8 376.0,239.2 375.0,239.2 375.0,239.4 374.0,239.4 374.0,239.6 373.0,239.6 373.0,239.7 372.0,239.7 372.0,240.0 371.0,240.0 371.0,239.9 370.0,239.9 370.0,240.4 369.0,240.4 369.0,240.3 368.0,240.3 368.0,240.7 367.0,240.7 367.0,240.9 366.0,240.9 366.0,241.0 365.0,241.0 365.0,241.7 364.0,241.7 364.0,242.5 363.0,242.5 363.0,243.4 362.0,243.4 362.0,243.6 361.0,243.6 361.0,243.7 360.0,243.7 360.0,245.3 359.0,245.3 359.0,244.0 358.0,244.0 358.0,242.1 357.0,242.1 357.0,240.9 356.0,240.9 356.0,240.1 355.0,240.1 355.0,239.6 354.0,239.6 354.0,239.5 353.0,239.5 353.0,240.3 352.0,240.3 352.0,240.4 351.0,240.4 351.0,241.5 350.0,241.5 350.0,243.1 349.0,243.1 349.0,245.6 348.0,245.6 348.0,250.3 347.0,250.3 347.0,243.9 346.0,243.9 346.0,239.4 345.0,239.4 345.0,239.5 344.0,239.5 344.0,239.6 343.0,239.6 343.0,239.6 342.0,239.6 342.0,239.9 341.0,239.9 341.0,240.3 340.0,240.3 340.0,240.9 339.0,240.9 339.0,241.8 338.0,241.8 338.0,244.2 337.0,244.2 337.0,244.8 336.0,244.8 336.0,241.5 335.0,241.5 335.0,240.3 334.0,240.3 334.0,239.5 333.0,239.5 333.0,239.7 332.0,239.7 332.0,239.9 331.0,239.9 331.0,240.0 330.0,240.0 330.0,240.7 329.0,240.7 329.0,241.6 328.0,241.6 328.0,243.1 327.0,243.1 327.0,247.0 326.0,247.0 326.0,252.4 325.0,252.4 325.0,247.3 324.0,247.3 324.0,242.8 323.0,242.8 323.0,239.6 322.0,239.6 322.0,239.7 321.0,239.7 321.0,239.7 320.0,239.7 320.0,239.6 319.0,239.6 319.0,239.6 318.0,239.6 318.0,239.9 317.0,239.9 317.0,240.0 316.0,240.0 316.0,240.1 315.0,240.1 315.0,240.4 314.0,240.4 314.0,240.9 313.0,240.9 313.0,240.7 312.0,240.7 312.0,241.1 311.0,241.1 311.0,241.5 310.0,241.5 310.0,241.5 309.0,241.5 309.0,241.5 308.0,241.5 308.0,242.4 307.0,242.4 307.0,242.6 306.0,242.6 306.0,243.8 305.0,243.8 305.0,244.5 304.0,244.5 304.0,246.1 303.0,246.1 303.0,249.5 302.0,249.5 302.0,256.3 301.0,256.3 301.0,245.9 300.0,245.9 300.0,239.5 299.0,239.5 299.0,239.1 298.0,239.1 298.0,238.8 297.0,238.8 297.0,238.8 296.0,238.8 296.0,238.8 295.0,238.8 295.0,238.9 294.0,238.9 294.0,238.7 293.0,238.7 293.0,238.9 292.0,238.9 292.0,238.8 291.0,238.8 291.0,238.7 290.0,238.7 290.0,238.9 289.0,238.9 289.0,239.0 288.0,239.0 288.0,239.2 287.0,239.2 287.0,239.2 286.0,239.2 286.0,239.4 285.0,239.4 285.0,239.8 284.0,239.8 284.0,239.9 283.0,239.9 283.0,240.2 282.0,240.2 282.0,240.6 281.0,240.6 281.0,240.8 280.0,240.8 280.0,241.0 279.0,241.0 279.0,240.5 278.0,240.5 278.0,239.5 277.0,239.5 277.0,239.0 276.0,239.0 276.0,238.7 275.0,238.7 275.0,239.1 274.0,239.1 274.0,239.5 273.0,239.5 273.0,239.9 272.0,239.9 272.0,239.9 271.0,239.9 271.0,240.3 270.0,240.3 270.0,240.6 269.0,240.6 269.0,239.9 268.0,239.9 268.0,239.4 267.0,239.4 267.0,238.4 266.0,238.4 266.0,238.5 265.0,238.5 265.0,238.6 264.0,238.6 264.0,238.6 263.0,238.6 263.0,238.5 262.0,238.5 262.0,238.7 261.0,238.7 261.0,239.1 260.0,239.1 260.0,239.5 259.0,239.5 259.0,239.6 258.0,239.6 258.0,239.7 257.0,239.7 257.0,239.6 256.0,239.6 256.0,239.7 255.0,239.7 255.0,240.3 254.0,240.3 254.0,239.9 253.0,239.9 253.0,239.5 252.0,239.5 252.0,239.5 251.0,239.5 251.0,239.5 250.0,239.5 250.0,239.9 249.0,239.9 249.0,240.2 248.0,240.2 248.0,240.9 247.0,240.9 247.0,241.5 246.0,241.5 246.0,241.6 245.0,241.6 245.0,242.3 244.0,242.3 244.0,241.3 243.0,241.3 243.0,240.2 242.0,240.2 242.0,239.4 241.0,239.4 241.0,238.7 240.0,238.7 240.0,238.8 239.0,238.8 239.0,238.7 238.0,238.7 238.0,238.9 237.0,238.9 237.0,238.8 236.0,238.8 236.0,239.0 235.0,239.0 235.0,239.4 234.0,239.4 234.0,239.6 233.0,239.6 233.0,240.0 232.0,240.0 232.0,240.0 231.0,240.0 231.0,239.7 230.0,239.7 230.0,240.3 229.0,240.3 229.0,240.5 228.0,240.5 228.0,241.1 227.0,241.1 227.0,241.7 226.0,241.7 226.0,241.1 225.0,241.1 225.0,240.4 224.0,240.4 224.0,240.6 223.0,240.6 223.0,240.3 222.0,240.3 222.0,241.4 221.0,241.4 221.0,240.7 220.0,240.7 220.0,240.0 219.0,240.0 219.0,238.6 218.0,238.6 218.0,238.6 217.0,238.6 217.0,238.6 216.0,238.6 216.0,238.7 215.0,238.7 215.0,238.6 214.0,238.6 214.0,238.8 213.0,238.8 213.0,238.7 212.0,238.7 212.0,238.7 211.0,238.7 211.0,238.7 210.0,238.7 210.0,238.8 209.0,238.8 209.0,239.5 208.0,239.5 208.0,238.7 207.0,238.7 207.0,239.5 206.0,239.5 206.0,238.7 205.0,238.7 205.0,238.7 204.0,238.7 204.0,238.7 203.0,238.7 203.0,239.3 202.0,239.3 202.0,239.6 201.0,239.6 201.0,240.2 200.0,240.2 200.0,240.7 199.0,240.7 199.0,241.6 198.0,241.6 198.0,241.4 197.0,241.4 197.0,241.1 196.0,241.1 196.0,240.3 195.0,240.3 195.0,240.0 194.0,240.0 194.0,239.5 193.0,239.5 193.0,238.9 192.0,238.9 192.0,239.2 191.0,239.2 191.0,239.4 190.0,239.4 190.0,240.0 189.0,240.0 189.0,240.1 188.0,240.1 188.0,239.8 187.0,239.8 187.0,239.7 186.0,239.7 186.0,239.2 185.0,239.2 185.0,239.0 184.0,239.0 184.0,239.4 183.0,239.4 183.0,239.4 182.0,239.4 182.0,239.8 181.0,239.8 181.0,240.3 180.0,240.3 180.0,240.6 179.0,240.6 179.0,240.9 178.0,240.9 178.0,241.2 177.0,241.2 177.0,241.8 176.0,241.8 176.0,242.2 175.0,242.2 175.0,242.5 174.0,242.5 174.0,243.4 173.0,243.4 173.0,244.1 172.0,244.1 172.0,242.0 171.0,242.0 171.0,239.6 170.0,239.6 170.0,238.0 169.0,238.0" fill="#000"/>
<rect x="58" y="139" width="239" height="39" fill="#00ff00"/>
<rect x="297" y="41" width="1" height="235" fill="#000"/>
<rect x="81" y="41" width="1" height="77" fill="#00ffff"/>
<rect x="15" y="45" width="163" height="1" fill="#008000"/>
<rect x="177" y="41" width="1" height="77" fill="#008000"/>
<rect x="173" y="41" width="8" height="8" fill="#008000"/>
<rect x="173" y="112" width="8" height="6" fill="#008000"/>
<polygon points="73,56 73,67 81,61.5" fill="#00ffff"/>
<polygon points="73,93 73,104 81,98.5" fill="#00ffff"/>
<polygon points="186,56 186,67 178,61.5" fill="#00ffff"/>
<polygon points="186,93 186,103 178,98" fill="#00ffff"/>
<polygon points="186,46 186,57 178,51.5" fill="#ff0000"/>
<polygon points="186,103 186,114 178,108.5" fill="#ff0000"/>
<rect x="160" y="203" width="532" height="1" fill="#008000"/>
<rect x="160" y="199" width="1" height="77" fill="#008000"/>
<rect x="156" y="199" width="8" height="8" fill="#008000"/>
<rect x="156" y="270" width="8" height="6" fill="#008000"/>
<polygon points="152,203 152,214 160,208.5" fill="#ff0000"/>
<polygon points="152,261 152,272 160,266.5" fill="#ff0000"/>
</svg>
<div class="red" style="left:20px;top:41px">Whenever I Call You Friend - Kenny Loggins &amp; Stevie Nix</div>
<div class="red" style="left:20px;top:199px">I'll Be There - Jackson 5</div>
<div class="red" style="left:565px;top:181px;letter-spacing:-0.15px">Time 17:04:01</div>
<div class="red" style="left:565px;top:260px">Talk :0</div>
<div class="abs" style="left:23px;top:294px;width:80px;height:50px;box-sizing:border-box;border:1px solid #7c7c80;border-radius:4px;background:linear-gradient(#a3a3a7,#9d9da1)"></div>
<div class="abs" style="left:113px;top:294px;width:80px;height:50px;box-sizing:border-box;border:1px solid #7c7c80;border-radius:4px;background:linear-gradient(#a3a3a7,#9d9da1)"></div>
<svg class="abs" style="left:40px;top:298px" width="140" height="44" viewBox="40 298 140 44">
<polygon points="48,304 48,335.5 80,320" fill="#808080"/>
<path d="M48.5 335.5L80 320.6" stroke="#fff" stroke-width="1.2" fill="none"/>
<rect x="138" y="304" width="30" height="30" fill="#808080" shape-rendering="crispEdges"/>
<path d="M168.5 304V334.5H138" stroke="#fff" stroke-width="1" fill="none" shape-rendering="crispEdges"/>
</svg>
<svg class="abs" style="left:208px;top:289px" width="335" height="60" viewBox="208 289 335 60" shape-rendering="crispEdges"><rect x="208" y="289" width="335" height="60" fill="#000"/><rect x="233" y="299" width="5" height="10" fill="#00ff00"/><rect x="233" y="329" width="5" height="10" fill="#00ff00"/><rect x="239" y="299" width="5" height="10" fill="#00ff00"/><rect x="239" y="329" width="5" height="10" fill="#00ff00"/><rect x="245" y="299" width="5" height="10" fill="#00ff00"/><rect x="245" y="329" width="5" height="10" fill="#00ff00"/><rect x="251" y="299" width="5" height="10" fill="#00ff00"/><rect x="251" y="329" width="5" height="10" fill="#00ff00"/><rect x="257" y="299" width="5" height="10" fill="#00ff00"/><rect x="257" y="329" width="5" height="10" fill="#00ff00"/><rect x="263" y="299" width="5" height="10" fill="#00ff00"/><rect x="263" y="329" width="5" height="10" fill="#00ff00"/><rect x="269" y="299" width="5" height="10" fill="#00ff00"/><rect x="269" y="329" width="5" height="10" fill="#00ff00"/><rect x="275" y="299" width="5" height="10" fill="#00ff00"/><rect x="275" y="329" width="5" height="10" fill="#00ff00"/><rect x="281" y="299" width="5" height="10" fill="#00ff00"/><rect x="281" y="329" width="5" height="10" fill="#00ff00"/><rect x="287" y="299" width="5" height="10" fill="#00ff00"/><rect x="287" y="329" width="5" height="10" fill="#00ff00"/><rect x="293" y="299" width="5" height="10" fill="#00ff00"/><rect x="293" y="329" width="5" height="10" fill="#00ff00"/><rect x="299" y="299" width="5" height="10" fill="#00ff00"/><rect x="299" y="329" width="5" height="10" fill="#00ff00"/><rect x="305" y="299" width="5" height="10" fill="#00ff00"/><rect x="305" y="329" width="5" height="10" fill="#00ff00"/><rect x="311" y="299" width="5" height="10" fill="#00ff00"/><rect x="311" y="329" width="5" height="10" fill="#00ff00"/><rect x="317" y="299" width="5" height="10" fill="#00ff00"/><rect x="317" y="329" width="5" height="10" fill="#00ff00"/><rect x="323" y="299" width="5" height="10" fill="#00ff00"/><rect x="323" y="329" width="5" height="10" fill="#00ff00"/><rect x="329" y="299" width="5" height="10" fill="#00ff00"/><rect x="329" y="329" width="5" height="10" fill="#00ff00"/><rect x="335" y="299" width="5" height="10" fill="#00ff00"/><rect x="335" y="329" width="5" height="10" fill="#00ff00"/><rect x="341" y="299" width="5" height="10" fill="#00ff00"/><rect x="341" y="329" width="5" height="10" fill="#00ff00"/><rect x="347" y="299" width="5" height="10" fill="#00ff00"/><rect x="347" y="329" width="5" height="10" fill="#00ff00"/><rect x="353" y="299" width="5" height="10" fill="#00ff00"/><rect x="353" y="329" width="5" height="10" fill="#00ff00"/><rect x="359" y="299" width="5" height="10" fill="#00ff00"/><rect x="359" y="329" width="5" height="10" fill="#00ff00"/><rect x="365" y="299" width="5" height="10" fill="#00ff00"/><rect x="365" y="329" width="5" height="10" fill="#00ff00"/><rect x="371" y="299" width="5" height="10" fill="#00ff00"/><rect x="371" y="329" width="5" height="10" fill="#00ff00"/><rect x="377" y="299" width="5" height="10" fill="#00ff00"/><rect x="377" y="329" width="5" height="10" fill="#00ff00"/><rect x="383" y="299" width="5" height="10" fill="#00ff00"/><rect x="383" y="329" width="5" height="10" fill="#00ff00"/><rect x="389" y="299" width="5" height="10" fill="#00ff00"/><rect x="389" y="329" width="5" height="10" fill="#00ff00"/><rect x="395" y="299" width="5" height="10" fill="#00ff00"/><rect x="395" y="329" width="5" height="10" fill="#00ff00"/><rect x="401" y="299" width="5" height="10" fill="#00ff00"/><rect x="401" y="329" width="5" height="10" fill="#00ff00"/><rect x="407" y="299" width="5" height="10" fill="#00ff00"/><rect x="407" y="329" width="5" height="10" fill="#00ff00"/><rect x="413" y="299" width="5" height="10" fill="#00ff00"/><rect x="413" y="329" width="5" height="10" fill="#00ff00"/><rect x="419" y="299" width="5" height="10" fill="#00ff00"/><rect x="419" y="329" width="5" height="10" fill="#00ff00"/><rect x="425" y="299" width="5" height="10" fill="#00ff00"/><rect x="425" y="329" width="5" height="10" fill="#00ff00"/><rect x="431" y="299" width="5" height="10" fill="#00ff00"/><rect x="431" y="329" width="5" height="10" fill="#00ff00"/><rect x="437" y="299" width="5" height="10" fill="#00ff00"/><rect x="437" y="329" width="5" height="10" fill="#00ff00"/><rect x="443" y="299" width="5" height="10" fill="#00ff00"/><rect x="443" y="329" width="5" height="10" fill="#00ff00"/><rect x="449" y="299" width="5" height="10" fill="#00ff00"/><rect x="449" y="329" width="5" height="10" fill="#00ff00"/><rect x="455" y="299" width="5" height="10" fill="#00ff00"/><rect x="455" y="329" width="5" height="10" fill="#00ff00"/><rect x="461" y="299" width="5" height="10" fill="#00ff00"/><rect x="461" y="329" width="5" height="10" fill="#00ff00"/><rect x="467" y="299" width="5" height="10" fill="#ffff00"/><rect x="467" y="329" width="5" height="10" fill="#ffff00"/><rect x="473" y="299" width="5" height="10" fill="#ffff00"/><rect x="473" y="329" width="5" height="10" fill="#ffff00"/><rect x="479" y="299" width="5" height="10" fill="#ffff00"/><rect x="479" y="329" width="5" height="10" fill="#ffff00"/><rect x="485" y="299" width="5" height="10" fill="#ffff00"/><rect x="485" y="329" width="5" height="10" fill="#ffff00"/><rect x="491" y="299" width="5" height="10" fill="#ffff00"/><rect x="491" y="329" width="5" height="10" fill="#ffff00"/><rect x="497" y="299" width="5" height="10" fill="#ffff00"/><rect x="497" y="329" width="5" height="10" fill="#ffff00"/><rect x="503" y="299" width="5" height="10" fill="#ff0000"/><rect x="503" y="329" width="5" height="10" fill="#ff0000"/><rect x="509" y="299" width="5" height="10" fill="#ff0000"/><rect x="509" y="329" width="5" height="10" fill="#ff0000"/><rect x="515" y="299" width="5" height="10" fill="#ff0000"/><rect x="515" y="329" width="5" height="10" fill="#ff0000"/><g font-family="DejaVu Sans, sans-serif" font-weight="bold" font-size="11.6" fill="#fff" text-rendering="geometricPrecision"><text x="218" y="308.4">L</text><text x="218" y="338.4">R</text><text x="230.5" y="323.8" text-anchor="middle">-30</text><text x="267" y="323.8" text-anchor="middle">-25</text><text x="307" y="323.8" text-anchor="middle">-20</text><text x="345" y="323.8" text-anchor="middle">-15</text><text x="386" y="323.8" text-anchor="middle">-10</text><text x="422" y="323.8" text-anchor="middle">-5</text><text x="467.5" y="323.8" text-anchor="middle">0</text><text x="531.5" y="323.8" text-anchor="middle">+8</text></g></svg>
<div class="abs" style="left:568px;top:284px;width:110px;height:25px;background:#c1c1c1;text-align:center;font-weight:bold;font-size:19.5px;line-height:25px;color:#000;letter-spacing:0.25px;text-indent:-2px">0:00:06.9</div>
<div class="lbl" style="left:575px;top:318px;width:80px">Remaining</div>
<div class="lbl" style="left:556px;top:330px;width:60px">Tracks</div>
<div class="lbl" style="left:616px;top:330px;width:60px">Time</div>
<div class="abs" style="left:568px;top:343px;width:40px;height:17px;background:#c1c1c1;text-align:center;font-size:12px;line-height:17px;color:#000">2</div>
<div class="abs" style="left:618px;top:343px;width:60px;height:17px;background:#c1c1c1;overflow:hidden;color:#ff0000;font-size:12px;line-height:17px;white-space:nowrap;letter-spacing:1.1px"><span style="position:absolute;left:-2.8px;top:0">-0:07:12.5</span></div>
<div class="btn" style="left:713px;top:44px;width:70px;height:70px;color:#767676;text-shadow:1px 1px 0 #66ff66;letter-spacing:0.25px;text-indent:-1.5px"><span style="top:27.0px">Start</span></div>
<div class="btn" style="left:713px;top:124px;width:70px;height:70px;color:#767676;text-shadow:1px 1px 0 #ff6666;letter-spacing:0.25px"><span style="top:27.0px">Record</span></div>
<div class="btn" style="left:713px;top:204px;width:70px;height:70px;color:#767676;text-shadow:1px 1px 0 #66ff66;letter-spacing:0.25px;text-indent:-1.5px"><span style="top:27.0px">Start</span></div>
<div class="abs" style="left:713px;top:284px;width:70px;height:70px;box-sizing:border-box;border:1px solid #c8c8c8;border-radius:4px;background:#0909f3;"><div class="abs" style="left:0;top:0;width:66px;height:66px;border:1px solid #10108c;border-radius:3px;background:#0909f3"></div><svg class="abs" style="left:3px;top:3px" width="63" height="63" shape-rendering="crispEdges"><g stroke="#ffff00" stroke-width="1" stroke-dasharray="1 1" fill="none"><path d="M2 0.5H62M2 61.5H62M0.5 1V61M61.5 1V61"/></g><rect x="0" y="0" width="1" height="1" fill="#ffff00"/></svg><span class="abs" style="left:0;width:68px;top:27px;text-align:center;font-weight:bold;font-size:12px;line-height:14px;color:#000;letter-spacing:0.2px;text-indent:-2.5px">Save</span></div>
<div class="btn" style="left:713px;top:389px;width:70px;height:70px;"><span style="top:27.0px">Hit Post</span></div>
<div class="btn" style="left:713px;top:569px;width:70px;height:70px;"><span style="top:27.0px">Do Over</span></div>
<div class="btn" style="left:713px;top:669px;width:80px;height:50px;"><span style="top:17.0px"><u>C</u>lose</span></div>
<div class="btn" style="left:23px;top:669px;width:80px;height:50px;"><span style="top:7.5px">Insert</span><span style="top:24.5px">Track</span></div>
<div class="btn" style="left:113px;top:669px;width:80px;height:50px;"><span style="top:7.5px">Delete</span><span style="top:24.5px">Track</span></div>
<div class="btn" style="left:513px;top:669px;width:80px;height:50px;"><span style="top:7.5px"><u>P</u>revious</span><span style="top:24.5px">Track</span></div>
<div class="btn" style="left:603px;top:669px;width:80px;height:50px;"><span style="top:7.5px"><u>N</u>ext</span><span style="top:24.5px">Track</span></div>
<div class="abs" style="left:13px;top:364px;width:680px;height:295px;box-sizing:border-box;border:1px solid #7d7d7d;border-radius:4px;background:#b4b4b4"></div>
<div class="abs" style="left:14px;top:365px;width:678px;height:293px;box-sizing:border-box;border:1px solid #a9a9a9;border-radius:3px;background:#c1c1c1"></div>
<div class="abs" style="left:15px;top:389px;width:660px;height:252px;background:#fff"></div>
<div class="abs" style="left:0;top:389px;width:806px;height:252px;overflow:hidden">
<div class="row" style="top:-4px"><svg class="abs" style="left:8px;top:5px" width="16" height="16" viewBox="0 0 16 16" shape-rendering="crispEdges"><rect x="7" y="0" width="2" height="1" fill="#000"/><rect x="6" y="1" width="1" height="1" fill="#a8a800"/><rect x="7" y="1" width="1" height="1" fill="#000"/><rect x="8" y="1" width="1" height="1" fill="#ffffff"/><rect x="5" y="2" width="1" height="1" fill="#a8a800"/><rect x="6" y="2" width="1" height="1" fill="#ffff00"/><rect x="7" y="2" width="1" height="1" fill="#000"/><rect x="8" y="2" width="1" height="1" fill="#ffffff"/><rect x="9" y="2" width="1" height="1" fill="#d0d0d0"/><rect x="4" y="3" width="1" height="1" fill="#a8a800"/><rect x="5" y="3" width="1" height="1" fill="#ffff00"/><rect x="6" y="3" width="1" height="1" fill="#000"/><rect x="7" y="3" width="3" height="1" fill="#ffffff"/><rect x="10" y="3" width="1" height="1" fill="#808080"/><rect x="14" y="3" width="1" height="1" fill="#808080"/><rect x="3" y="4" width="1" height="1" fill="#a8a800"/><rect x="4" y="4" width="1" height="1" fill="#ffff00"/><rect x="5" y="4" width="1" height="1" fill="#ffffff"/><rect x="6" y="4" width="1" height="1" fill="#000"/><rect x="7" y="4" width="3" height="1" fill="#ffffff"/><rect x="10" y="4" width="1" height="1" fill="#808080"/><rect x="13" y="4" width="1" height="1" fill="#808080"/><rect x="0" y="5" width="3" height="1" fill="#a8a800"/><rect x="3" y="5" width="1" height="1" fill="#ffff00"/><rect x="4" y="5" width="1" height="1" fill="#ffffff"/><rect x="5" y="5" width="1" height="1" fill="#ffff00"/><rect x="6" y="5" width="1" height="1" fill="#000"/><rect x="7" y="5" width="3" height="1" fill="#ffffff"/><rect x="10" y="5" width="1" height="1" fill="#808080"/><rect x="12" y="5" width="1" height="1" fill="#808080"/><rect x="0" y="6" width="1" height="1" fill="#a8a800"/><rect x="1" y="6" width="1" height="1" fill="#ffff00"/><rect x="2" y="6" width="2" height="1" fill="#ffffff"/><rect x="4" y="6" width="1" height="1" fill="#ffff00"/><rect x="5" y="6" width="1" height="1" fill="#ffffff"/><rect x="6" y="6" width="2" height="1" fill="#000"/><rect x="8" y="6" width="2" height="1" fill="#ffffff"/><rect x="10" y="6" width="1" height="1" fill="#808080"/><rect x="0" y="7" width="1" height="1" fill="#a8a800"/><rect x="1" y="7" width="1" height="1" fill="#ffff00"/><rect x="2" y="7" width="1" height="1" fill="#ffffff"/><rect x="3" y="7" width="1" height="1" fill="#ffff00"/><rect x="4" y="7" width="1" height="1" fill="#ffffff"/><rect x="5" y="7" width="1" height="1" fill="#ffff00"/><rect x="6" y="7" width="1" height="1" fill="#000"/><rect x="7" y="7" width="1" height="1" fill="#ffffff"/><rect x="8" y="7" width="1" height="1" fill="#000"/><rect x="9" y="7" width="1" height="1" fill="#ffffff"/><rect x="10" y="7" width="1" height="1" fill="#808080"/><rect x="0" y="8" width="1" height="1" fill="#a8a800"/><rect x="1" y="8" width="1" height="1" fill="#ffff00"/><rect x="2" y="8" width="2" height="1" fill="#ffffff"/><rect x="4" y="8" width="1" height="1" fill="#ffff00"/><rect x="5" y="8" width="1" height="1" fill="#ffffff"/><rect x="6" y="8" width="1" height="1" fill="#000"/><rect x="7" y="8" width="1" height="1" fill="#ffffff"/><rect x="8" y="8" width="1" height="1" fill="#000"/><rect x="9" y="8" width="1" height="1" fill="#ffffff"/><rect x="10" y="8" width="1" height="1" fill="#808080"/><rect x="12" y="8" width="4" height="1" fill="#808080"/><rect x="0" y="9" width="1" height="1" fill="#000"/><rect x="1" y="9" width="1" height="1" fill="#ffff00"/><rect x="2" y="9" width="1" height="1" fill="#ffffff"/><rect x="3" y="9" width="1" height="1" fill="#ffff00"/><rect x="4" y="9" width="1" height="1" fill="#ffffff"/><rect x="5" y="9" width="1" height="1" fill="#ffff00"/><rect x="6" y="9" width="2" height="1" fill="#000"/><rect x="8" y="9" width="2" height="1" fill="#ffffff"/><rect x="10" y="9" width="1" height="1" fill="#808080"/><rect x="1" y="10" width="2" height="1" fill="#000"/><rect x="3" y="10" width="2" height="1" fill="#ffff00"/><rect x="5" y="10" width="1" height="1" fill="#ffffff"/><rect x="6" y="10" width="1" height="1" fill="#000"/><rect x="7" y="10" width="3" height="1" fill="#ffffff"/><rect x="10" y="10" width="1" height="1" fill="#808080"/><rect x="3" y="11" width="1" height="1" fill="#000"/><rect x="4" y="11" width="2" height="1" fill="#ffff00"/><rect x="6" y="11" width="1" height="1" fill="#000"/><rect x="7" y="11" width="3" height="1" fill="#ffffff"/><rect x="10" y="11" width="1" height="1" fill="#808080"/><rect x="12" y="11" width="1" height="1" fill="#808080"/><rect x="4" y="12" width="1" height="1" fill="#000"/><rect x="5" y="12" width="1" height="1" fill="#ffff00"/><rect x="6" y="12" width="1" height="1" fill="#000"/><rect x="7" y="12" width="3" height="1" fill="#ffffff"/><rect x="10" y="12" width="1" height="1" fill="#808080"/><rect x="13" y="12" width="1" height="1" fill="#808080"/><rect x="5" y="13" width="1" height="1" fill="#000"/><rect x="6" y="13" width="1" height="1" fill="#ffff00"/><rect x="7" y="13" width="1" height="1" fill="#000"/><rect x="8" y="13" width="1" height="1" fill="#ffffff"/><rect x="9" y="13" width="1" height="1" fill="#d0d0d0"/><rect x="10" y="13" width="1" height="1" fill="#808080"/><rect x="14" y="13" width="1" height="1" fill="#808080"/><rect x="6" y="14" width="1" height="1" fill="#000"/><rect x="7" y="14" width="1" height="1" fill="#ffff00"/><rect x="8" y="14" width="1" height="1" fill="#000"/><rect x="7" y="15" width="2" height="1" fill="#000"/></svg><span class="c" style="left:32px;width:80px;letter-spacing:0.2px">16:48:11.0</span><span class="c" style="left:112px;width:56px">SEGUE</span><span class="c" style="left:169.5px;width:78px;letter-spacing:0.45px">010687</span><span class="c" style="left:247.5px;width:61px;letter-spacing:0.3px">MUSIC</span><span style="left:307px;width:60px;text-align:right">3:37.5</span><span style="left:377.5px;letter-spacing:0.12px">Jumpin' Jack Flash -- rdhost 11/30 14:47</span></div>
<div class="row" style="top:22px"><svg class="abs" style="left:8px;top:5px" width="16" height="16" viewBox="0 0 16 16" shape-rendering="crispEdges"><rect x="7" y="0" width="2" height="1" fill="#000"/><rect x="6" y="1" width="1" height="1" fill="#a8a800"/><rect x="7" y="1" width="1" height="1" fill="#000"/><rect x="8" y="1" width="1" height="1" fill="#ffffff"/><rect x="5" y="2" width="1" height="1" fill="#a8a800"/><rect x="6" y="2" width="1" height="1" fill="#ffff00"/><rect x="7" y="2" width="1" height="1" fill="#000"/><rect x="8" y="2" width="1" height="1" fill="#ffffff"/><rect x="9" y="2" width="1" height="1" fill="#d0d0d0"/><rect x="4" y="3" width="1" height="1" fill="#a8a800"/><rect x="5" y="3" width="1" height="1" fill="#ffff00"/><rect x="6" y="3" width="1" height="1" fill="#000"/><rect x="7" y="3" width="3" height="1" fill="#ffffff"/><rect x="10" y="3" width="1" height="1" fill="#808080"/><rect x="14" y="3" width="1" height="1" fill="#808080"/><rect x="3" y="4" width="1" height="1" fill="#a8a800"/><rect x="4" y="4" width="1" height="1" fill="#ffff00"/><rect x="5" y="4" width="1" height="1" fill="#ffffff"/><rect x="6" y="4" width="1" height="1" fill="#000"/><rect x="7" y="4" width="3" height="1" fill="#ffffff"/><rect x="10" y="4" width="1" height="1" fill="#808080"/><rect x="13" y="4" width="1" height="1" fill="#808080"/><rect x="0" y="5" width="3" height="1" fill="#a8a800"/><rect x="3" y="5" width="1" height="1" fill="#ffff00"/><rect x="4" y="5" width="1" height="1" fill="#ffffff"/><rect x="5" y="5" width="1" height="1" fill="#ffff00"/><rect x="6" y="5" width="1" height="1" fill="#000"/><rect x="7" y="5" width="3" height="1" fill="#ffffff"/><rect x="10" y="5" width="1" height="1" fill="#808080"/><rect x="12" y="5" width="1" height="1" fill="#808080"/><rect x="0" y="6" width="1" height="1" fill="#a8a800"/><rect x="1" y="6" width="1" height="1" fill="#ffff00"/><rect x="2" y="6" width="2" height="1" fill="#ffffff"/><rect x="4" y="6" width="1" height="1" fill="#ffff00"/><rect x="5" y="6" width="1" height="1" fill="#ffffff"/><rect x="6" y="6" width="2" height="1" fill="#000"/><rect x="8" y="6" width="2" height="1" fill="#ffffff"/><rect x="10" y="6" width="1" height="1" fill="#808080"/><rect x="0" y="7" width="1" height="1" fill="#a8a800"/><rect x="1" y="7" width="1" height="1" fill="#ffff00"/><rect x="2" y="7" width="1" height="1" fill="#ffffff"/><rect x="3" y="7" width="1" height="1" fill="#ffff00"/><rect x="4" y="7" width="1" height="1" fill="#ffffff"/><rect x="5" y="7" width="1" height="1" fill="#ffff00"/><rect x="6" y="7" width="1" height="1" fill="#000"/><rect x="7" y="7" width="1" height="1" fill="#ffffff"/><rect x="8" y="7" width="1" height="1" fill="#000"/><rect x="9" y="7" width="1" height="1" fill="#ffffff"/><rect x="10" y="7" width="1" height="1" fill="#808080"/><rect x="0" y="8" width="1" height="1" fill="#a8a800"/><rect x="1" y="8" width="1" height="1" fill="#ffff00"/><rect x="2" y="8" width="2" height="1" fill="#ffffff"/><rect x="4" y="8" width="1" height="1" fill="#ffff00"/><rect x="5" y="8" width="1" height="1" fill="#ffffff"/><rect x="6" y="8" width="1" height="1" fill="#000"/><rect x="7" y="8" width="1" height="1" fill="#ffffff"/><rect x="8" y="8" width="1" height="1" fill="#000"/><rect x="9" y="8" width="1" height="1" fill="#ffffff"/><rect x="10" y="8" width="1" height="1" fill="#808080"/><rect x="12" y="8" width="4" height="1" fill="#808080"/><rect x="0" y="9" width="1" height="1" fill="#000"/><rect x="1" y="9" width="1" height="1" fill="#ffff00"/><rect x="2" y="9" width="1" height="1" fill="#ffffff"/><rect x="3" y="9" width="1" height="1" fill="#ffff00"/><rect x="4" y="9" width="1" height="1" fill="#ffffff"/><rect x="5" y="9" width="1" height="1" fill="#ffff00"/><rect x="6" y="9" width="2" height="1" fill="#000"/><rect x="8" y="9" width="2" height="1" fill="#ffffff"/><rect x="10" y="9" width="1" height="1" fill="#808080"/><rect x="1" y="10" width="2" height="1" fill="#000"/><rect x="3" y="10" width="2" height="1" fill="#ffff00"/><rect x="5" y="10" width="1" height="1" fill="#ffffff"/><rect x="6" y="10" width="1" height="1" fill="#000"/><rect x="7" y="10" width="3" height="1" fill="#ffffff"/><rect x="10" y="10" width="1" height="1" fill="#808080"/><rect x="3" y="11" width="1" height="1" fill="#000"/><rect x="4" y="11" width="2" height="1" fill="#ffff00"/><rect x="6" y="11" width="1" height="1" fill="#000"/><rect x="7" y="11" width="3" height="1" fill="#ffffff"/><rect x="10" y="11" width="1" height="1" fill="#808080"/><rect x="12" y="11" width="1" height="1" fill="#808080"/><rect x="4" y="12" width="1" height="1" fill="#000"/><rect x="5" y="12" width="1" height="1" fill="#ffff00"/><rect x="6" y="12" width="1" height="1" fill="#000"/><rect x="7" y="12" width="3" height="1" fill="#ffffff"/><rect x="10" y="12" width="1" height="1" fill="#808080"/><rect x="13" y="12" width="1" height="1" fill="#808080"/><rect x="5" y="13" width="1" height="1" fill="#000"/><rect x="6" y="13" width="1" height="1" fill="#ffff00"/><rect x="7" y="13" width="1" height="1" fill="#000"/><rect x="8" y="13" width="1" height="1" fill="#ffffff"/><rect x="9" y="13" width="1" height="1" fill="#d0d0d0"/><rect x="10" y="13" width="1" height="1" fill="#808080"/><rect x="14" y="13" width="1" height="1" fill="#808080"/><rect x="6" y="14" width="1" height="1" fill="#000"/><rect x="7" y="14" width="1" height="1" fill="#ffff00"/><rect x="8" y="14" width="1" height="1" fill="#000"/><rect x="7" y="15" width="2" height="1" fill="#000"/></svg><span class="c" style="left:32px;width:80px;letter-spacing:0.2px">16:49:12.0</span><span class="c" style="left:112px;width:56px">SEGUE</span><span class="c" style="left:169.5px;width:78px;letter-spacing:0.45px">010011</span><span class="c" style="left:247.5px;width:61px;letter-spacing:0.3px">MUSIC</span><span style="left:307px;width:60px;text-align:right">3:31.3</span><span style="left:377.5px;letter-spacing:0.12px">Bang The Drum All Day -- rdhost 11/30 09:39</span></div>
<div class="row" style="top:48px"><svg class="abs" style="left:8px;top:5px" width="16" height="16" viewBox="0 0 16 16" shape-rendering="crispEdges"><rect x="7" y="0" width="2" height="1" fill="#000"/><rect x="6" y="1" width="1" height="1" fill="#a8a800"/><rect x="7" y="1" width="1" height="1" fill="#000"/><rect x="8" y="1" width="1" height="1" fill="#ffffff"/><rect x="5" y="2" width="1" height="1" fill="#a8a800"/><rect x="6" y="2" width="1" height="1" fill="#ffff00"/><rect x="7" y="2" width="1" height="1" fill="#000"/><rect x="8" y="2" width="1" height="1" fill="#ffffff"/><rect x="9" y="2" width="1" height="1" fill="#d0d0d0"/><rect x="4" y="3" width="1" height="1" fill="#a8a800"/><rect x="5" y="3" width="1" height="1" fill="#ffff00"/><rect x="6" y="3" width="1" height="1" fill="#000"/><rect x="7" y="3" width="3" height="1" fill="#ffffff"/><rect x="10" y="3" width="1" height="1" fill="#808080"/><rect x="14" y="3" width="1" height="1" fill="#808080"/><rect x="3" y="4" width="1" height="1" fill="#a8a800"/><rect x="4" y="4" width="1" height="1" fill="#ffff00"/><rect x="5" y="4" width="1" height="1" fill="#ffffff"/><rect x="6" y="4" width="1" height="1" fill="#000"/><rect x="7" y="4" width="3" height="1" fill="#ffffff"/><rect x="10" y="4" width="1" height="1" fill="#808080"/><rect x="13" y="4" width="1" height="1" fill="#808080"/><rect x="0" y="5" width="3" height="1" fill="#a8a800"/><rect x="3" y="5" width="1" height="1" fill="#ffff00"/><rect x="4" y="5" width="1" height="1" fill="#ffffff"/><rect x="5" y="5" width="1" height="1" fill="#ffff00"/><rect x="6" y="5" width="1" height="1" fill="#000"/><rect x="7" y="5" width="3" height="1" fill="#ffffff"/><rect x="10" y="5" width="1" height="1" fill="#808080"/><rect x="12" y="5" width="1" height="1" fill="#808080"/><rect x="0" y="6" width="1" height="1" fill="#a8a800"/><rect x="1" y="6" width="1" height="1" fill="#ffff00"/><rect x="2" y="6" width="2" height="1" fill="#ffffff"/><rect x="4" y="6" width="1" height="1" fill="#ffff00"/><rect x="5" y="6" width="1" height="1" fill="#ffffff"/><rect x="6" y="6" width="2" height="1" fill="#000"/><rect x="8" y="6" width="2" height="1" fill="#ffffff"/><rect x="10" y="6" width="1" height="1" fill="#808080"/><rect x="0" y="7" width="1" height="1" fill="#a8a800"/><rect x="1" y="7" width="1" height="1" fill="#ffff00"/><rect x="2" y="7" width="1" height="1" fill="#ffffff"/><rect x="3" y="7" width="1" height="1" fill="#ffff00"/><rect x="4" y="7" width="1" height="1" fill="#ffffff"/><rect x="5" y="7" width="1" height="1" fill="#ffff00"/><rect x="6" y="7" width="1" height="1" fill="#000"/><rect x="7" y="7" width="1" height="1" fill="#ffffff"/><rect x="8" y="7" width="1" height="1" fill="#000"/><rect x="9" y="7" width="1" height="1" fill="#ffffff"/><rect x="10" y="7" width="1" height="1" fill="#808080"/><rect x="0" y="8" width="1" height="1" fill="#a8a800"/><rect x="1" y="8" width="1" height="1" fill="#ffff00"/><rect x="2" y="8" width="2" height="1" fill="#ffffff"/><rect x="4" y="8" width="1" height="1" fill="#ffff00"/><rect x="5" y="8" width="1" height="1" fill="#ffffff"/><rect x="6" y="8" width="1" height="1" fill="#000"/><rect x="7" y="8" width="1" height="1" fill="#ffffff"/><rect x="8" y="8" width="1" height="1" fill="#000"/><rect x="9" y="8" width="1" height="1" fill="#ffffff"/><rect x="10" y="8" width="1" height="1" fill="#808080"/><rect x="12" y="8" width="4" height="1" fill="#808080"/><rect x="0" y="9" width="1" height="1" fill="#000"/><rect x="1" y="9" width="1" height="1" fill="#ffff00"/><rect x="2" y="9" width="1" height="1" fill="#ffffff"/><rect x="3" y="9" width="1" height="1" fill="#ffff00"/><rect x="4" y="9" width="1" height="1" fill="#ffffff"/><rect x="5" y="9" width="1" height="1" fill="#ffff00"/><rect x="6" y="9" width="2" height="1" fill="#000"/><rect x="8" y="9" width="2" height="1" fill="#ffffff"/><rect x="10" y="9" width="1" height="1" fill="#808080"/><rect x="1" y="10" width="2" height="1" fill="#000"/><rect x="3" y="10" width="2" height="1" fill="#ffff00"/><rect x="5" y="10" width="1" height="1" fill="#ffffff"/><rect x="6" y="10" width="1" height="1" fill="#000"/><rect x="7" y="10" width="3" height="1" fill="#ffffff"/><rect x="10" y="10" width="1" height="1" fill="#808080"/><rect x="3" y="11" width="1" height="1" fill="#000"/><rect x="4" y="11" width="2" height="1" fill="#ffff00"/><rect x="6" y="11" width="1" height="1" fill="#000"/><rect x="7" y="11" width="3" height="1" fill="#ffffff"/><rect x="10" y="11" width="1" height="1" fill="#808080"/><rect x="12" y="11" width="1" height="1" fill="#808080"/><rect x="4" y="12" width="1" height="1" fill="#000"/><rect x="5" y="12" width="1" height="1" fill="#ffff00"/><rect x="6" y="12" width="1" height="1" fill="#000"/><rect x="7" y="12" width="3" height="1" fill="#ffffff"/><rect x="10" y="12" width="1" height="1" fill="#808080"/><rect x="13" y="12" width="1" height="1" fill="#808080"/><rect x="5" y="13" width="1" height="1" fill="#000"/><rect x="6" y="13" width="1" height="1" fill="#ffff00"/><rect x="7" y="13" width="1" height="1" fill="#000"/><rect x="8" y="13" width="1" height="1" fill="#ffffff"/><rect x="9" y="13" width="1" height="1" fill="#d0d0d0"/><rect x="10" y="13" width="1" height="1" fill="#808080"/><rect x="14" y="13" width="1" height="1" fill="#808080"/><rect x="6" y="14" width="1" height="1" fill="#000"/><rect x="7" y="14" width="1" height="1" fill="#ffff00"/><rect x="8" y="14" width="1" height="1" fill="#000"/><rect x="7" y="15" width="2" height="1" fill="#000"/></svg><span class="c" style="left:32px;width:80px;letter-spacing:0.2px">16:50:11.0</span><span class="c" style="left:112px;width:56px">SEGUE</span><span class="c" style="left:169.5px;width:78px;letter-spacing:0.45px">010422</span><span class="c" style="left:247.5px;width:61px;letter-spacing:0.3px">MUSIC</span><span style="left:307px;width:60px;text-align:right">5:08.2</span><span style="left:377.5px;letter-spacing:0.12px">Space Oddity -- rdhost 11/30 10:32</span></div>
<div class="row" style="top:74px"><svg class="abs" style="left:8px;top:5px" width="16" height="16" viewBox="0 0 16 16" shape-rendering="crispEdges"><rect x="0" y="0" width="16" height="1" fill="#000"/><rect x="0" y="1" width="1" height="1" fill="#000"/><rect x="1" y="1" width="11" height="1" fill="#f3edb8"/><rect x="12" y="1" width="1" height="1" fill="#000"/><rect x="13" y="1" width="1" height="1" fill="#ffd428"/><rect x="14" y="1" width="1" height="1" fill="#f09010"/><rect x="15" y="1" width="1" height="1" fill="#000"/><rect x="0" y="2" width="1" height="1" fill="#000"/><rect x="1" y="2" width="1" height="1" fill="#f3edb8"/><rect x="2" y="2" width="9" height="1" fill="#e0d67c"/><rect x="11" y="2" width="1" height="1" fill="#000"/><rect x="12" y="2" width="1" height="1" fill="#ffd428"/><rect x="13" y="2" width="1" height="1" fill="#f09010"/><rect x="14" y="2" width="2" height="1" fill="#000"/><rect x="0" y="3" width="1" height="1" fill="#000"/><rect x="1" y="3" width="1" height="1" fill="#f3edb8"/><rect x="2" y="3" width="8" height="1" fill="#e0d67c"/><rect x="10" y="3" width="1" height="1" fill="#000"/><rect x="11" y="3" width="1" height="1" fill="#ffd428"/><rect x="12" y="3" width="1" height="1" fill="#f09010"/><rect x="13" y="3" width="1" height="1" fill="#000"/><rect x="14" y="3" width="1" height="1" fill="#e0d67c"/><rect x="15" y="3" width="1" height="1" fill="#000"/><rect x="0" y="4" width="1" height="1" fill="#000"/><rect x="1" y="4" width="1" height="1" fill="#f3edb8"/><rect x="2" y="4" width="7" height="1" fill="#e0d67c"/><rect x="9" y="4" width="1" height="1" fill="#000"/><rect x="10" y="4" width="1" height="1" fill="#ffd428"/><rect x="11" y="4" width="1" height="1" fill="#f09010"/><rect x="12" y="4" width="1" height="1" fill="#000"/><rect x="13" y="4" width="2" height="1" fill="#e0d67c"/><rect x="15" y="4" width="1" height="1" fill="#000"/><rect x="0" y="5" width="1" height="1" fill="#000"/><rect x="1" y="5" width="1" height="1" fill="#f3edb8"/><rect x="2" y="5" width="6" height="1" fill="#e0d67c"/><rect x="8" y="5" width="1" height="1" fill="#000"/><rect x="9" y="5" width="1" height="1" fill="#ffd428"/><rect x="10" y="5" width="1" height="1" fill="#f09010"/><rect x="11" y="5" width="1" height="1" fill="#000"/><rect x="12" y="5" width="3" height="1" fill="#e0d67c"/><rect x="15" y="5" width="1" height="1" fill="#000"/><rect x="0" y="6" width="1" height="1" fill="#000"/><rect x="1" y="6" width="1" height="1" fill="#f3edb8"/><rect x="2" y="6" width="6" height="1" fill="#e0d67c"/><rect x="8" y="6" width="1" height="1" fill="#000"/><rect x="9" y="6" width="1" height="1" fill="#ffd428"/><rect x="10" y="6" width="1" height="1" fill="#000"/><rect x="11" y="6" width="4" height="1" fill="#e0d67c"/><rect x="15" y="6" width="1" height="1" fill="#000"/><rect x="0" y="7" width="1" height="1" fill="#000"/><rect x="1" y="7" width="1" height="1" fill="#f3edb8"/><rect x="2" y="7" width="5" height="1" fill="#e0d67c"/><rect x="7" y="7" width="3" height="1" fill="#000"/><rect x="10" y="7" width="5" height="1" fill="#e0d67c"/><rect x="15" y="7" width="1" height="1" fill="#000"/><rect x="0" y="8" width="1" height="1" fill="#000"/><rect x="1" y="8" width="1" height="1" fill="#f3edb8"/><rect x="2" y="8" width="5" height="1" fill="#e0d67c"/><rect x="7" y="8" width="2" height="1" fill="#000"/><rect x="9" y="8" width="6" height="1" fill="#e0d67c"/><rect x="15" y="8" width="1" height="1" fill="#000"/><rect x="0" y="9" width="1" height="1" fill="#000"/><rect x="1" y="9" width="1" height="1" fill="#f3edb8"/><rect x="2" y="9" width="13" height="1" fill="#e0d67c"/><rect x="15" y="9" width="1" height="1" fill="#000"/><rect x="0" y="10" width="1" height="1" fill="#000"/><rect x="1" y="10" width="1" height="1" fill="#f3edb8"/><rect x="2" y="10" width="13" height="1" fill="#e0d67c"/><rect x="15" y="10" width="1" height="1" fill="#000"/><rect x="0" y="11" width="1" height="1" fill="#000"/><rect x="1" y="11" width="1" height="1" fill="#f3edb8"/><rect x="2" y="11" width="13" height="1" fill="#e0d67c"/><rect x="15" y="11" width="1" height="1" fill="#000"/><rect x="0" y="12" width="1" height="1" fill="#000"/><rect x="1" y="12" width="14" height="1" fill="#f6f2cc"/><rect x="15" y="12" width="1" height="1" fill="#000"/><rect x="0" y="13" width="1" height="1" fill="#000"/><rect x="1" y="13" width="14" height="1" fill="#cdc266"/><rect x="15" y="13" width="1" height="1" fill="#000"/><rect x="0" y="14" width="1" height="1" fill="#000"/><rect x="1" y="14" width="14" height="1" fill="#cdc266"/><rect x="15" y="14" width="1" height="1" fill="#000"/><rect x="0" y="15" width="16" height="1" fill="#000"/></svg><span class="c" style="left:32px;width:80px;letter-spacing:0.2px">H17:00:00.0</span><span class="c" style="left:112px;width:56px">SEGUE</span><span class="c" style="left:169.5px;width:78px;letter-spacing:0.1px">MARKER</span><span class="c" style="left:247.5px;width:61px;letter-spacing:0.3px"></span><span style="left:307px;width:60px;text-align:right"></span><span style="left:377.5px;letter-spacing:0.12px">Legal ID Goes Here</span></div>
<div class="row" style="top:100px"><svg class="abs" style="left:8px;top:5px" width="16" height="16" viewBox="0 0 16 16" shape-rendering="crispEdges"><rect x="7" y="0" width="2" height="1" fill="#000"/><rect x="6" y="1" width="1" height="1" fill="#a8a800"/><rect x="7" y="1" width="1" height="1" fill="#000"/><rect x="8" y="1" width="1" height="1" fill="#ffffff"/><rect x="5" y="2" width="1" height="1" fill="#a8a800"/><rect x="6" y="2" width="1" height="1" fill="#ffff00"/><rect x="7" y="2" width="1" height="1" fill="#000"/><rect x="8" y="2" width="1" height="1" fill="#ffffff"/><rect x="9" y="2" width="1" height="1" fill="#d0d0d0"/><rect x="4" y="3" width="1" height="1" fill="#a8a800"/><rect x="5" y="3" width="1" height="1" fill="#ffff00"/><rect x="6" y="3" width="1" height="1" fill="#000"/><rect x="7" y="3" width="3" height="1" fill="#ffffff"/><rect x="10" y="3" width="1" height="1" fill="#808080"/><rect x="14" y="3" width="1" height="1" fill="#808080"/><rect x="3" y="4" width="1" height="1" fill="#a8a800"/><rect x="4" y="4" width="1" height="1" fill="#ffff00"/><rect x="5" y="4" width="1" height="1" fill="#ffffff"/><rect x="6" y="4" width="1" height="1" fill="#000"/><rect x="7" y="4" width="3" height="1" fill="#ffffff"/><rect x="10" y="4" width="1" height="1" fill="#808080"/><rect x="13" y="4" width="1" height="1" fill="#808080"/><rect x="0" y="5" width="3" height="1" fill="#a8a800"/><rect x="3" y="5" width="1" height="1" fill="#ffff00"/><rect x="4" y="5" width="1" height="1" fill="#ffffff"/><rect x="5" y="5" width="1" height="1" fill="#ffff00"/><rect x="6" y="5" width="1" height="1" fill="#000"/><rect x="7" y="5" width="3" height="1" fill="#ffffff"/><rect x="10" y="5" width="1" height="1" fill="#808080"/><rect x="12" y="5" width="1" height="1" fill="#808080"/><rect x="0" y="6" width="1" height="1" fill="#a8a800"/><rect x="1" y="6" width="1" height="1" fill="#ffff00"/><rect x="2" y="6" width="2" height="1" fill="#ffffff"/><rect x="4" y="6" width="1" height="1" fill="#ffff00"/><rect x="5" y="6" width="1" height="1" fill="#ffffff"/><rect x="6" y="6" width="2" height="1" fill="#000"/><rect x="8" y="6" width="2" height="1" fill="#ffffff"/><rect x="10" y="6" width="1" height="1" fill="#808080"/><rect x="0" y="7" width="1" height="1" fill="#a8a800"/><rect x="1" y="7" width="1" height="1" fill="#ffff00"/><rect x="2" y="7" width="1" height="1" fill="#ffffff"/><rect x="3" y="7" width="1" height="1" fill="#ffff00"/><rect x="4" y="7" width="1" height="1" fill="#ffffff"/><rect x="5" y="7" width="1" height="1" fill="#ffff00"/><rect x="6" y="7" width="1" height="1" fill="#000"/><rect x="7" y="7" width="1" height="1" fill="#ffffff"/><rect x="8" y="7" width="1" height="1" fill="#000"/><rect x="9" y="7" width="1" height="1" fill="#ffffff"/><rect x="10" y="7" width="1" height="1" fill="#808080"/><rect x="0" y="8" width="1" height="1" fill="#a8a800"/><rect x="1" y="8" width="1" height="1" fill="#ffff00"/><rect x="2" y="8" width="2" height="1" fill="#ffffff"/><rect x="4" y="8" width="1" height="1" fill="#ffff00"/><rect x="5" y="8" width="1" height="1" fill="#ffffff"/><rect x="6" y="8" width="1" height="1" fill="#000"/><rect x="7" y="8" width="1" height="1" fill="#ffffff"/><rect x="8" y="8" width="1" height="1" fill="#000"/><rect x="9" y="8" width="1" height="1" fill="#ffffff"/><rect x="10" y="8" width="1" height="1" fill="#808080"/><rect x="12" y="8" width="4" height="1" fill="#808080"/><rect x="0" y="9" width="1" height="1" fill="#000"/><rect x="1" y="9" width="1" height="1" fill="#ffff00"/><rect x="2" y="9" width="1" height="1" fill="#ffffff"/><rect x="3" y="9" width="1" height="1" fill="#ffff00"/><rect x="4" y="9" width="1" height="1" fill="#ffffff"/><rect x="5" y="9" width="1" height="1" fill="#ffff00"/><rect x="6" y="9" width="2" height="1" fill="#000"/><rect x="8" y="9" width="2" height="1" fill="#ffffff"/><rect x="10" y="9" width="1" height="1" fill="#808080"/><rect x="1" y="10" width="2" height="1" fill="#000"/><rect x="3" y="10" width="2" height="1" fill="#ffff00"/><rect x="5" y="10" width="1" height="1" fill="#ffffff"/><rect x="6" y="10" width="1" height="1" fill="#000"/><rect x="7" y="10" width="3" height="1" fill="#ffffff"/><rect x="10" y="10" width="1" height="1" fill="#808080"/><rect x="3" y="11" width="1" height="1" fill="#000"/><rect x="4" y="11" width="2" height="1" fill="#ffff00"/><rect x="6" y="11" width="1" height="1" fill="#000"/><rect x="7" y="11" width="3" height="1" fill="#ffffff"/><rect x="10" y="11" width="1" height="1" fill="#808080"/><rect x="12" y="11" width="1" height="1" fill="#808080"/><rect x="4" y="12" width="1" height="1" fill="#000"/><rect x="5" y="12" width="1" height="1" fill="#ffff00"/><rect x="6" y="12" width="1" height="1" fill="#000"/><rect x="7" y="12" width="3" height="1" fill="#ffffff"/><rect x="10" y="12" width="1" height="1" fill="#808080"/><rect x="13" y="12" width="1" height="1" fill="#808080"/><rect x="5" y="13" width="1" height="1" fill="#000"/><rect x="6" y="13" width="1" height="1" fill="#ffff00"/><rect x="7" y="13" width="1" height="1" fill="#000"/><rect x="8" y="13" width="1" height="1" fill="#ffffff"/><rect x="9" y="13" width="1" height="1" fill="#d0d0d0"/><rect x="10" y="13" width="1" height="1" fill="#808080"/><rect x="14" y="13" width="1" height="1" fill="#808080"/><rect x="6" y="14" width="1" height="1" fill="#000"/><rect x="7" y="14" width="1" height="1" fill="#ffff00"/><rect x="8" y="14" width="1" height="1" fill="#000"/><rect x="7" y="15" width="2" height="1" fill="#000"/></svg><span class="c" style="left:32px;width:80px;letter-spacing:0.2px">17:01:00.0</span><span class="c" style="left:112px;width:56px">SEGUE</span><span class="c" style="left:169.5px;width:78px;letter-spacing:0.45px">010265</span><span class="c" style="left:247.5px;width:61px;letter-spacing:0.3px">MUSIC</span><span style="left:307px;width:60px;text-align:right">3:58.4</span><span style="left:377.5px;letter-spacing:0.12px">Whenever I Call You Friend -- rdhost 11/30 10:11</span></div>
<div class="row sel" style="top:126px"><svg class="abs" style="left:8px;top:5px" width="16" height="16" viewBox="0 0 16 16" shape-rendering="crispEdges"><rect x="7" y="0" width="1" height="1" fill="#9c9cb4"/><rect x="8" y="0" width="1" height="1" fill="#8484a0"/><rect x="9" y="0" width="1" height="1" fill="#606088"/><rect x="6" y="1" width="1" height="1" fill="#b8b8c8"/><rect x="7" y="1" width="1" height="1" fill="#9c9cb4"/><rect x="8" y="1" width="1" height="1" fill="#8484a0"/><rect x="9" y="1" width="1" height="1" fill="#606088"/><rect x="10" y="1" width="1" height="1" fill="#404070"/><rect x="6" y="2" width="1" height="1" fill="#b8b8c8"/><rect x="7" y="2" width="1" height="1" fill="#9c9cb4"/><rect x="8" y="2" width="1" height="1" fill="#8484a0"/><rect x="9" y="2" width="1" height="1" fill="#606088"/><rect x="10" y="2" width="1" height="1" fill="#404070"/><rect x="6" y="3" width="1" height="1" fill="#b8b8c8"/><rect x="7" y="3" width="1" height="1" fill="#9c9cb4"/><rect x="8" y="3" width="1" height="1" fill="#8484a0"/><rect x="9" y="3" width="1" height="1" fill="#606088"/><rect x="10" y="3" width="1" height="1" fill="#404070"/><rect x="6" y="4" width="1" height="1" fill="#b8b8c8"/><rect x="7" y="4" width="1" height="1" fill="#9c9cb4"/><rect x="8" y="4" width="1" height="1" fill="#8484a0"/><rect x="9" y="4" width="1" height="1" fill="#606088"/><rect x="10" y="4" width="1" height="1" fill="#404070"/><rect x="5" y="5" width="2" height="1" fill="#8080a0"/><rect x="7" y="5" width="1" height="1" fill="#8484a0"/><rect x="8" y="5" width="1" height="1" fill="#606088"/><rect x="9" y="5" width="3" height="1" fill="#404070"/><rect x="5" y="6" width="1" height="1" fill="#8080a0"/><rect x="6" y="6" width="1" height="1" fill="#e8e8f0"/><rect x="7" y="6" width="1" height="1" fill="#ffffff"/><rect x="8" y="6" width="1" height="1" fill="#9c9cb4"/><rect x="9" y="6" width="2" height="1" fill="#404070"/><rect x="5" y="7" width="1" height="1" fill="#8080a0"/><rect x="6" y="7" width="1" height="1" fill="#e8e8f0"/><rect x="7" y="7" width="1" height="1" fill="#ffffff"/><rect x="8" y="7" width="1" height="1" fill="#9c9cb4"/><rect x="9" y="7" width="2" height="1" fill="#404070"/><rect x="5" y="8" width="1" height="1" fill="#8080a0"/><rect x="6" y="8" width="1" height="1" fill="#e8e8f0"/><rect x="7" y="8" width="1" height="1" fill="#ffffff"/><rect x="8" y="8" width="1" height="1" fill="#9c9cb4"/><rect x="9" y="8" width="2" height="1" fill="#404070"/><rect x="5" y="9" width="1" height="1" fill="#8080a0"/><rect x="6" y="9" width="2" height="1" fill="#e8e8f0"/><rect x="8" y="9" width="1" height="1" fill="#8484a0"/><rect x="9" y="9" width="2" height="1" fill="#404070"/><rect x="5" y="10" width="1" height="1" fill="#ffffff"/><rect x="6" y="10" width="1" height="1" fill="#e8e8f0"/><rect x="7" y="10" width="3" height="1" fill="#404070"/><rect x="10" y="10" width="1" height="1" fill="#ffffff"/><rect x="11" y="10" width="1" height="1" fill="#8080a0"/><rect x="6" y="11" width="1" height="1" fill="#8080a0"/><rect x="7" y="11" width="2" height="1" fill="#ffffff"/><rect x="9" y="11" width="1" height="1" fill="#e8e8f0"/><rect x="10" y="11" width="1" height="1" fill="#8080a0"/><rect x="7" y="12" width="1" height="1" fill="#9c9cb4"/><rect x="8" y="12" width="2" height="1" fill="#404070"/><rect x="7" y="13" width="1" height="1" fill="#9c9cb4"/><rect x="8" y="13" width="2" height="1" fill="#404070"/><rect x="6" y="14" width="1" height="1" fill="#b8b8c8"/><rect x="7" y="14" width="1" height="1" fill="#9c9cb4"/><rect x="8" y="14" width="2" height="1" fill="#404070"/><rect x="10" y="14" width="1" height="1" fill="#8080a0"/><rect x="6" y="15" width="1" height="1" fill="#b8b8c8"/><rect x="7" y="15" width="1" height="1" fill="#9c9cb4"/><rect x="8" y="15" width="2" height="1" fill="#404070"/><rect x="10" y="15" width="1" height="1" fill="#8080a0"/></svg><span class="c" style="left:32px;width:80px;letter-spacing:0.2px"></span><span class="c" style="left:112px;width:56px">SEGUE</span><span class="c" style="left:169.5px;width:78px;letter-spacing:0.1px">TRACK</span><span class="c" style="left:247.5px;width:61px;letter-spacing:0.3px"></span><span style="left:307px;width:60px;text-align:right"></span><span style="left:377.5px;letter-spacing:0.12px">Voice Track</span></div>
<div class="row" style="top:152px"><svg class="abs" style="left:8px;top:5px" width="16" height="16" viewBox="0 0 16 16" shape-rendering="crispEdges"><rect x="7" y="0" width="2" height="1" fill="#000"/><rect x="6" y="1" width="1" height="1" fill="#a8a800"/><rect x="7" y="1" width="1" height="1" fill="#000"/><rect x="8" y="1" width="1" height="1" fill="#ffffff"/><rect x="5" y="2" width="1" height="1" fill="#a8a800"/><rect x="6" y="2" width="1" height="1" fill="#ffff00"/><rect x="7" y="2" width="1" height="1" fill="#000"/><rect x="8" y="2" width="1" height="1" fill="#ffffff"/><rect x="9" y="2" width="1" height="1" fill="#d0d0d0"/><rect x="4" y="3" width="1" height="1" fill="#a8a800"/><rect x="5" y="3" width="1" height="1" fill="#ffff00"/><rect x="6" y="3" width="1" height="1" fill="#000"/><rect x="7" y="3" width="3" height="1" fill="#ffffff"/><rect x="10" y="3" width="1" height="1" fill="#808080"/><rect x="14" y="3" width="1" height="1" fill="#808080"/><rect x="3" y="4" width="1" height="1" fill="#a8a800"/><rect x="4" y="4" width="1" height="1" fill="#ffff00"/><rect x="5" y="4" width="1" height="1" fill="#ffffff"/><rect x="6" y="4" width="1" height="1" fill="#000"/><rect x="7" y="4" width="3" height="1" fill="#ffffff"/><rect x="10" y="4" width="1" height="1" fill="#808080"/><rect x="13" y="4" width="1" height="1" fill="#808080"/><rect x="0" y="5" width="3" height="1" fill="#a8a800"/><rect x="3" y="5" width="1" height="1" fill="#ffff00"/><rect x="4" y="5" width="1" height="1" fill="#ffffff"/><rect x="5" y="5" width="1" height="1" fill="#ffff00"/><rect x="6" y="5" width="1" height="1" fill="#000"/><rect x="7" y="5" width="3" height="1" fill="#ffffff"/><rect x="10" y="5" width="1" height="1" fill="#808080"/><rect x="12" y="5" width="1" height="1" fill="#808080"/><rect x="0" y="6" width="1" height="1" fill="#a8a800"/><rect x="1" y="6" width="1" height="1" fill="#ffff00"/><rect x="2" y="6" width="2" height="1" fill="#ffffff"/><rect x="4" y="6" width="1" height="1" fill="#ffff00"/><rect x="5" y="6" width="1" height="1" fill="#ffffff"/><rect x="6" y="6" width="2" height="1" fill="#000"/><rect x="8" y="6" width="2" height="1" fill="#ffffff"/><rect x="10" y="6" width="1" height="1" fill="#808080"/><rect x="0" y="7" width="1" height="1" fill="#a8a800"/><rect x="1" y="7" width="1" height="1" fill="#ffff00"/><rect x="2" y="7" width="1" height="1" fill="#ffffff"/><rect x="3" y="7" width="1" height="1" fill="#ffff00"/><rect x="4" y="7" width="1" height="1" fill="#ffffff"/><rect x="5" y="7" width="1" height="1" fill="#ffff00"/><rect x="6" y="7" width="1" height="1" fill="#000"/><rect x="7" y="7" width="1" height="1" fill="#ffffff"/><rect x="8" y="7" width="1" height="1" fill="#000"/><rect x="9" y="7" width="1" height="1" fill="#ffffff"/><rect x="10" y="7" width="1" height="1" fill="#808080"/><rect x="0" y="8" width="1" height="1" fill="#a8a800"/><rect x="1" y="8" width="1" height="1" fill="#ffff00"/><rect x="2" y="8" width="2" height="1" fill="#ffffff"/><rect x="4" y="8" width="1" height="1" fill="#ffff00"/><rect x="5" y="8" width="1" height="1" fill="#ffffff"/><rect x="6" y="8" width="1" height="1" fill="#000"/><rect x="7" y="8" width="1" height="1" fill="#ffffff"/><rect x="8" y="8" width="1" height="1" fill="#000"/><rect x="9" y="8" width="1" height="1" fill="#ffffff"/><rect x="10" y="8" width="1" height="1" fill="#808080"/><rect x="12" y="8" width="4" height="1" fill="#808080"/><rect x="0" y="9" width="1" height="1" fill="#000"/><rect x="1" y="9" width="1" height="1" fill="#ffff00"/><rect x="2" y="9" width="1" height="1" fill="#ffffff"/><rect x="3" y="9" width="1" height="1" fill="#ffff00"/><rect x="4" y="9" width="1" height="1" fill="#ffffff"/><rect x="5" y="9" width="1" height="1" fill="#ffff00"/><rect x="6" y="9" width="2" height="1" fill="#000"/><rect x="8" y="9" width="2" height="1" fill="#ffffff"/><rect x="10" y="9" width="1" height="1" fill="#808080"/><rect x="1" y="10" width="2" height="1" fill="#000"/><rect x="3" y="10" width="2" height="1" fill="#ffff00"/><rect x="5" y="10" width="1" height="1" fill="#ffffff"/><rect x="6" y="10" width="1" height="1" fill="#000"/><rect x="7" y="10" width="3" height="1" fill="#ffffff"/><rect x="10" y="10" width="1" height="1" fill="#808080"/><rect x="3" y="11" width="1" height="1" fill="#000"/><rect x="4" y="11" width="2" height="1" fill="#ffff00"/><rect x="6" y="11" width="1" height="1" fill="#000"/><rect x="7" y="11" width="3" height="1" fill="#ffffff"/><rect x="10" y="11" width="1" height="1" fill="#808080"/><rect x="12" y="11" width="1" height="1" fill="#808080"/><rect x="4" y="12" width="1" height="1" fill="#000"/><rect x="5" y="12" width="1" height="1" fill="#ffff00"/><rect x="6" y="12" width="1" height="1" fill="#000"/><rect x="7" y="12" width="3" height="1" fill="#ffffff"/><rect x="10" y="12" width="1" height="1" fill="#808080"/><rect x="13" y="12" width="1" height="1" fill="#808080"/><rect x="5" y="13" width="1" height="1" fill="#000"/><rect x="6" y="13" width="1" height="1" fill="#ffff00"/><rect x="7" y="13" width="1" height="1" fill="#000"/><rect x="8" y="13" width="1" height="1" fill="#ffffff"/><rect x="9" y="13" width="1" height="1" fill="#d0d0d0"/><rect x="10" y="13" width="1" height="1" fill="#808080"/><rect x="14" y="13" width="1" height="1" fill="#808080"/><rect x="6" y="14" width="1" height="1" fill="#000"/><rect x="7" y="14" width="1" height="1" fill="#ffff00"/><rect x="8" y="14" width="1" height="1" fill="#000"/><rect x="7" y="15" width="2" height="1" fill="#000"/></svg><span class="c" style="left:32px;width:80px;letter-spacing:0.2px">17:02:00.0</span><span class="c" style="left:112px;width:56px">SEGUE</span><span class="c" style="left:169.5px;width:78px;letter-spacing:0.45px">010353</span><span class="c" style="left:247.5px;width:61px;letter-spacing:0.3px">MUSIC</span><span style="left:307px;width:60px;text-align:right">3:51.9</span><span style="left:377.5px;letter-spacing:0.12px">I'll Be There -- rdhost 11/30 10:24</span></div>
<div class="row" style="top:178px"><svg class="abs" style="left:8px;top:5px" width="16" height="16" viewBox="0 0 16 16" shape-rendering="crispEdges"><rect x="7" y="0" width="2" height="1" fill="#000"/><rect x="6" y="1" width="1" height="1" fill="#a8a800"/><rect x="7" y="1" width="1" height="1" fill="#000"/><rect x="8" y="1" width="1" height="1" fill="#ffffff"/><rect x="5" y="2" width="1" height="1" fill="#a8a800"/><rect x="6" y="2" width="1" height="1" fill="#ffff00"/><rect x="7" y="2" width="1" height="1" fill="#000"/><rect x="8" y="2" width="1" height="1" fill="#ffffff"/><rect x="9" y="2" width="1" height="1" fill="#d0d0d0"/><rect x="4" y="3" width="1" height="1" fill="#a8a800"/><rect x="5" y="3" width="1" height="1" fill="#ffff00"/><rect x="6" y="3" width="1" height="1" fill="#000"/><rect x="7" y="3" width="3" height="1" fill="#ffffff"/><rect x="10" y="3" width="1" height="1" fill="#808080"/><rect x="14" y="3" width="1" height="1" fill="#808080"/><rect x="3" y="4" width="1" height="1" fill="#a8a800"/><rect x="4" y="4" width="1" height="1" fill="#ffff00"/><rect x="5" y="4" width="1" height="1" fill="#ffffff"/><rect x="6" y="4" width="1" height="1" fill="#000"/><rect x="7" y="4" width="3" height="1" fill="#ffffff"/><rect x="10" y="4" width="1" height="1" fill="#808080"/><rect x="13" y="4" width="1" height="1" fill="#808080"/><rect x="0" y="5" width="3" height="1" fill="#a8a800"/><rect x="3" y="5" width="1" height="1" fill="#ffff00"/><rect x="4" y="5" width="1" height="1" fill="#ffffff"/><rect x="5" y="5" width="1" height="1" fill="#ffff00"/><rect x="6" y="5" width="1" height="1" fill="#000"/><rect x="7" y="5" width="3" height="1" fill="#ffffff"/><rect x="10" y="5" width="1" height="1" fill="#808080"/><rect x="12" y="5" width="1" height="1" fill="#808080"/><rect x="0" y="6" width="1" height="1" fill="#a8a800"/><rect x="1" y="6" width="1" height="1" fill="#ffff00"/><rect x="2" y="6" width="2" height="1" fill="#ffffff"/><rect x="4" y="6" width="1" height="1" fill="#ffff00"/><rect x="5" y="6" width="1" height="1" fill="#ffffff"/><rect x="6" y="6" width="2" height="1" fill="#000"/><rect x="8" y="6" width="2" height="1" fill="#ffffff"/><rect x="10" y="6" width="1" height="1" fill="#808080"/><rect x="0" y="7" width="1" height="1" fill="#a8a800"/><rect x="1" y="7" width="1" height="1" fill="#ffff00"/><rect x="2" y="7" width="1" height="1" fill="#ffffff"/><rect x="3" y="7" width="1" height="1" fill="#ffff00"/><rect x="4" y="7" width="1" height="1" fill="#ffffff"/><rect x="5" y="7" width="1" height="1" fill="#ffff00"/><rect x="6" y="7" width="1" height="1" fill="#000"/><rect x="7" y="7" width="1" height="1" fill="#ffffff"/><rect x="8" y="7" width="1" height="1" fill="#000"/><rect x="9" y="7" width="1" height="1" fill="#ffffff"/><rect x="10" y="7" width="1" height="1" fill="#808080"/><rect x="0" y="8" width="1" height="1" fill="#a8a800"/><rect x="1" y="8" width="1" height="1" fill="#ffff00"/><rect x="2" y="8" width="2" height="1" fill="#ffffff"/><rect x="4" y="8" width="1" height="1" fill="#ffff00"/><rect x="5" y="8" width="1" height="1" fill="#ffffff"/><rect x="6" y="8" width="1" height="1" fill="#000"/><rect x="7" y="8" width="1" height="1" fill="#ffffff"/><rect x="8" y="8" width="1" height="1" fill="#000"/><rect x="9" y="8" width="1" height="1" fill="#ffffff"/><rect x="10" y="8" width="1" height="1" fill="#808080"/><rect x="12" y="8" width="4" height="1" fill="#808080"/><rect x="0" y="9" width="1" height="1" fill="#000"/><rect x="1" y="9" width="1" height="1" fill="#ffff00"/><rect x="2" y="9" width="1" height="1" fill="#ffffff"/><rect x="3" y="9" width="1" height="1" fill="#ffff00"/><rect x="4" y="9" width="1" height="1" fill="#ffffff"/><rect x="5" y="9" width="1" height="1" fill="#ffff00"/><rect x="6" y="9" width="2" height="1" fill="#000"/><rect x="8" y="9" width="2" height="1" fill="#ffffff"/><rect x="10" y="9" width="1" height="1" fill="#808080"/><rect x="1" y="10" width="2" height="1" fill="#000"/><rect x="3" y="10" width="2" height="1" fill="#ffff00"/><rect x="5" y="10" width="1" height="1" fill="#ffffff"/><rect x="6" y="10" width="1" height="1" fill="#000"/><rect x="7" y="10" width="3" height="1" fill="#ffffff"/><rect x="10" y="10" width="1" height="1" fill="#808080"/><rect x="3" y="11" width="1" height="1" fill="#000"/><rect x="4" y="11" width="2" height="1" fill="#ffff00"/><rect x="6" y="11" width="1" height="1" fill="#000"/><rect x="7" y="11" width="3" height="1" fill="#ffffff"/><rect x="10" y="11" width="1" height="1" fill="#808080"/><rect x="12" y="11" width="1" height="1" fill="#808080"/><rect x="4" y="12" width="1" height="1" fill="#000"/><rect x="5" y="12" width="1" height="1" fill="#ffff00"/><rect x="6" y="12" width="1" height="1" fill="#000"/><rect x="7" y="12" width="3" height="1" fill="#ffffff"/><rect x="10" y="12" width="1" height="1" fill="#808080"/><rect x="13" y="12" width="1" height="1" fill="#808080"/><rect x="5" y="13" width="1" height="1" fill="#000"/><rect x="6" y="13" width="1" height="1" fill="#ffff00"/><rect x="7" y="13" width="1" height="1" fill="#000"/><rect x="8" y="13" width="1" height="1" fill="#ffffff"/><rect x="9" y="13" width="1" height="1" fill="#d0d0d0"/><rect x="10" y="13" width="1" height="1" fill="#808080"/><rect x="14" y="13" width="1" height="1" fill="#808080"/><rect x="6" y="14" width="1" height="1" fill="#000"/><rect x="7" y="14" width="1" height="1" fill="#ffff00"/><rect x="8" y="14" width="1" height="1" fill="#000"/><rect x="7" y="15" width="2" height="1" fill="#000"/></svg><span class="c" style="left:32px;width:80px;letter-spacing:0.2px">17:03:00.0</span><span class="c" style="left:112px;width:56px">SEGUE</span><span class="c" style="left:169.5px;width:78px;letter-spacing:0.45px">010625</span><span class="c" style="left:247.5px;width:61px;letter-spacing:0.3px">MUSIC</span><span style="left:307px;width:60px;text-align:right">4:23.1</span><span style="left:377.5px;letter-spacing:0.12px">Total Eclipse Of The Heart -- rdhost 11/30 14:38</span></div>
<div class="row" style="top:204px"><svg class="abs" style="left:8px;top:5px" width="16" height="16" viewBox="0 0 16 16" shape-rendering="crispEdges"><rect x="7" y="0" width="2" height="1" fill="#000"/><rect x="6" y="1" width="1" height="1" fill="#a8a800"/><rect x="7" y="1" width="1" height="1" fill="#000"/><rect x="8" y="1" width="1" height="1" fill="#ffffff"/><rect x="5" y="2" width="1" height="1" fill="#a8a800"/><rect x="6" y="2" width="1" height="1" fill="#ffff00"/><rect x="7" y="2" width="1" height="1" fill="#000"/><rect x="8" y="2" width="1" height="1" fill="#ffffff"/><rect x="9" y="2" width="1" height="1" fill="#d0d0d0"/><rect x="4" y="3" width="1" height="1" fill="#a8a800"/><rect x="5" y="3" width="1" height="1" fill="#ffff00"/><rect x="6" y="3" width="1" height="1" fill="#000"/><rect x="7" y="3" width="3" height="1" fill="#ffffff"/><rect x="10" y="3" width="1" height="1" fill="#808080"/><rect x="14" y="3" width="1" height="1" fill="#808080"/><rect x="3" y="4" width="1" height="1" fill="#a8a800"/><rect x="4" y="4" width="1" height="1" fill="#ffff00"/><rect x="5" y="4" width="1" height="1" fill="#ffffff"/><rect x="6" y="4" width="1" height="1" fill="#000"/><rect x="7" y="4" width="3" height="1" fill="#ffffff"/><rect x="10" y="4" width="1" height="1" fill="#808080"/><rect x="13" y="4" width="1" height="1" fill="#808080"/><rect x="0" y="5" width="3" height="1" fill="#a8a800"/><rect x="3" y="5" width="1" height="1" fill="#ffff00"/><rect x="4" y="5" width="1" height="1" fill="#ffffff"/><rect x="5" y="5" width="1" height="1" fill="#ffff00"/><rect x="6" y="5" width="1" height="1" fill="#000"/><rect x="7" y="5" width="3" height="1" fill="#ffffff"/><rect x="10" y="5" width="1" height="1" fill="#808080"/><rect x="12" y="5" width="1" height="1" fill="#808080"/><rect x="0" y="6" width="1" height="1" fill="#a8a800"/><rect x="1" y="6" width="1" height="1" fill="#ffff00"/><rect x="2" y="6" width="2" height="1" fill="#ffffff"/><rect x="4" y="6" width="1" height="1" fill="#ffff00"/><rect x="5" y="6" width="1" height="1" fill="#ffffff"/><rect x="6" y="6" width="2" height="1" fill="#000"/><rect x="8" y="6" width="2" height="1" fill="#ffffff"/><rect x="10" y="6" width="1" height="1" fill="#808080"/><rect x="0" y="7" width="1" height="1" fill="#a8a800"/><rect x="1" y="7" width="1" height="1" fill="#ffff00"/><rect x="2" y="7" width="1" height="1" fill="#ffffff"/><rect x="3" y="7" width="1" height="1" fill="#ffff00"/><rect x="4" y="7" width="1" height="1" fill="#ffffff"/><rect x="5" y="7" width="1" height="1" fill="#ffff00"/><rect x="6" y="7" width="1" height="1" fill="#000"/><rect x="7" y="7" width="1" height="1" fill="#ffffff"/><rect x="8" y="7" width="1" height="1" fill="#000"/><rect x="9" y="7" width="1" height="1" fill="#ffffff"/><rect x="10" y="7" width="1" height="1" fill="#808080"/><rect x="0" y="8" width="1" height="1" fill="#a8a800"/><rect x="1" y="8" width="1" height="1" fill="#ffff00"/><rect x="2" y="8" width="2" height="1" fill="#ffffff"/><rect x="4" y="8" width="1" height="1" fill="#ffff00"/><rect x="5" y="8" width="1" height="1" fill="#ffffff"/><rect x="6" y="8" width="1" height="1" fill="#000"/><rect x="7" y="8" width="1" height="1" fill="#ffffff"/><rect x="8" y="8" width="1" height="1" fill="#000"/><rect x="9" y="8" width="1" height="1" fill="#ffffff"/><rect x="10" y="8" width="1" height="1" fill="#808080"/><rect x="12" y="8" width="4" height="1" fill="#808080"/><rect x="0" y="9" width="1" height="1" fill="#000"/><rect x="1" y="9" width="1" height="1" fill="#ffff00"/><rect x="2" y="9" width="1" height="1" fill="#ffffff"/><rect x="3" y="9" width="1" height="1" fill="#ffff00"/><rect x="4" y="9" width="1" height="1" fill="#ffffff"/><rect x="5" y="9" width="1" height="1" fill="#ffff00"/><rect x="6" y="9" width="2" height="1" fill="#000"/><rect x="8" y="9" width="2" height="1" fill="#ffffff"/><rect x="10" y="9" width="1" height="1" fill="#808080"/><rect x="1" y="10" width="2" height="1" fill="#000"/><rect x="3" y="10" width="2" height="1" fill="#ffff00"/><rect x="5" y="10" width="1" height="1" fill="#ffffff"/><rect x="6" y="10" width="1" height="1" fill="#000"/><rect x="7" y="10" width="3" height="1" fill="#ffffff"/><rect x="10" y="10" width="1" height="1" fill="#808080"/><rect x="3" y="11" width="1" height="1" fill="#000"/><rect x="4" y="11" width="2" height="1" fill="#ffff00"/><rect x="6" y="11" width="1" height="1" fill="#000"/><rect x="7" y="11" width="3" height="1" fill="#ffffff"/><rect x="10" y="11" width="1" height="1" fill="#808080"/><rect x="12" y="11" width="1" height="1" fill="#808080"/><rect x="4" y="12" width="1" height="1" fill="#000"/><rect x="5" y="12" width="1" height="1" fill="#ffff00"/><rect x="6" y="12" width="1" height="1" fill="#000"/><rect x="7" y="12" width="3" height="1" fill="#ffffff"/><rect x="10" y="12" width="1" height="1" fill="#808080"/><rect x="13" y="12" width="1" height="1" fill="#808080"/><rect x="5" y="13" width="1" height="1" fill="#000"/><rect x="6" y="13" width="1" height="1" fill="#ffff00"/><rect x="7" y="13" width="1" height="1" fill="#000"/><rect x="8" y="13" width="1" height="1" fill="#ffffff"/><rect x="9" y="13" width="1" height="1" fill="#d0d0d0"/><rect x="10" y="13" width="1" height="1" fill="#808080"/><rect x="14" y="13" width="1" height="1" fill="#808080"/><rect x="6" y="14" width="1" height="1" fill="#000"/><rect x="7" y="14" width="1" height="1" fill="#ffff00"/><rect x="8" y="14" width="1" height="1" fill="#000"/><rect x="7" y="15" width="2" height="1" fill="#000"/></svg><span class="c" style="left:32px;width:80px;letter-spacing:0.2px">17:04:00.0</span><span class="c" style="left:112px;width:56px">SEGUE</span><span class="c" style="left:169.5px;width:78px;letter-spacing:0.45px">010663</span><span class="c" style="left:247.5px;width:61px;letter-spacing:0.3px">MUSIC</span><span style="left:307px;width:60px;text-align:right">2:45.8</span><span style="left:377.5px;letter-spacing:0.12px">Friday On My Mind -- rdhost 11/30 14:44</span></div>
<div class="row" style="top:230px"><svg class="abs" style="left:8px;top:5px" width="16" height="16" viewBox="0 0 16 16" shape-rendering="crispEdges"><rect x="7" y="0" width="1" height="1" fill="#8080b4"/><rect x="8" y="0" width="1" height="1" fill="#585890"/><rect x="9" y="0" width="1" height="1" fill="#30305e"/><rect x="6" y="1" width="1" height="1" fill="#a8a8d0"/><rect x="7" y="1" width="1" height="1" fill="#8080b4"/><rect x="8" y="1" width="1" height="1" fill="#585890"/><rect x="9" y="1" width="1" height="1" fill="#30305e"/><rect x="10" y="1" width="1" height="1" fill="#16164a"/><rect x="6" y="2" width="1" height="1" fill="#a8a8d0"/><rect x="7" y="2" width="1" height="1" fill="#8080b4"/><rect x="8" y="2" width="1" height="1" fill="#585890"/><rect x="9" y="2" width="1" height="1" fill="#30305e"/><rect x="10" y="2" width="1" height="1" fill="#16164a"/><rect x="6" y="3" width="1" height="1" fill="#a8a8d0"/><rect x="7" y="3" width="1" height="1" fill="#8080b4"/><rect x="8" y="3" width="1" height="1" fill="#585890"/><rect x="9" y="3" width="1" height="1" fill="#30305e"/><rect x="10" y="3" width="1" height="1" fill="#16164a"/><rect x="6" y="4" width="1" height="1" fill="#a8a8d0"/><rect x="7" y="4" width="1" height="1" fill="#8080b4"/><rect x="8" y="4" width="1" height="1" fill="#585890"/><rect x="9" y="4" width="1" height="1" fill="#30305e"/><rect x="10" y="4" width="1" height="1" fill="#16164a"/><rect x="5" y="5" width="2" height="1" fill="#484878"/><rect x="7" y="5" width="1" height="1" fill="#585890"/><rect x="8" y="5" width="1" height="1" fill="#30305e"/><rect x="9" y="5" width="3" height="1" fill="#16164a"/><rect x="5" y="6" width="1" height="1" fill="#484878"/><rect x="6" y="6" width="1" height="1" fill="#c8c8e8"/><rect x="7" y="6" width="1" height="1" fill="#f0f0ff"/><rect x="8" y="6" width="1" height="1" fill="#8080b4"/><rect x="9" y="6" width="2" height="1" fill="#16164a"/><rect x="5" y="7" width="1" height="1" fill="#484878"/><rect x="6" y="7" width="1" height="1" fill="#c8c8e8"/><rect x="7" y="7" width="1" height="1" fill="#f0f0ff"/><rect x="8" y="7" width="1" height="1" fill="#8080b4"/><rect x="9" y="7" width="2" height="1" fill="#16164a"/><rect x="5" y="8" width="1" height="1" fill="#484878"/><rect x="6" y="8" width="1" height="1" fill="#c8c8e8"/><rect x="7" y="8" width="1" height="1" fill="#f0f0ff"/><rect x="8" y="8" width="1" height="1" fill="#8080b4"/><rect x="9" y="8" width="2" height="1" fill="#16164a"/><rect x="5" y="9" width="1" height="1" fill="#484878"/><rect x="6" y="9" width="2" height="1" fill="#c8c8e8"/><rect x="8" y="9" width="1" height="1" fill="#585890"/><rect x="9" y="9" width="2" height="1" fill="#16164a"/><rect x="5" y="10" width="1" height="1" fill="#f0f0ff"/><rect x="6" y="10" width="1" height="1" fill="#c8c8e8"/><rect x="7" y="10" width="3" height="1" fill="#16164a"/><rect x="10" y="10" width="1" height="1" fill="#f0f0ff"/><rect x="11" y="10" width="1" height="1" fill="#484878"/><rect x="6" y="11" width="1" height="1" fill="#484878"/><rect x="7" y="11" width="2" height="1" fill="#f0f0ff"/><rect x="9" y="11" width="1" height="1" fill="#c8c8e8"/><rect x="10" y="11" width="1" height="1" fill="#484878"/><rect x="7" y="12" width="1" height="1" fill="#8080b4"/><rect x="8" y="12" width="2" height="1" fill="#16164a"/><rect x="7" y="13" width="1" height="1" fill="#8080b4"/><rect x="8" y="13" width="2" height="1" fill="#16164a"/><rect x="6" y="14" width="1" height="1" fill="#a8a8d0"/><rect x="7" y="14" width="1" height="1" fill="#8080b4"/><rect x="8" y="14" width="2" height="1" fill="#16164a"/><rect x="10" y="14" width="1" height="1" fill="#484878"/><rect x="6" y="15" width="1" height="1" fill="#a8a8d0"/><rect x="7" y="15" width="1" height="1" fill="#8080b4"/><rect x="8" y="15" width="2" height="1" fill="#16164a"/><rect x="10" y="15" width="1" height="1" fill="#484878"/></svg><span class="c" style="left:32px;width:80px;letter-spacing:0.2px"></span><span class="c" style="left:112px;width:56px">SEGUE</span><span class="c" style="left:169.5px;width:78px;letter-spacing:0.1px">TRACK</span><span class="c" style="left:247.5px;width:61px;letter-spacing:0.3px"></span><span style="left:307px;width:60px;text-align:right"></span><span style="left:377.5px;letter-spacing:0.12px">Voice Track</span></div>
</div>
<div class="hd" style="left:15px;width:33px"></div>
<div class="hd" style="left:48px;width:80px">TIME</div>
<div class="hd" style="left:128px;width:56px">TRANS</div>
<div class="hd" style="left:184px;width:78px">CART</div>
<div class="hd" style="left:262px;width:61px">GROUP</div>
<div class="hd" style="left:323px;width:65px">LENGTH</div>
<div class="hd" style="left:388px;width:287px">TITLE</div>
<div class="chk" style="left:675px;top:366px;width:16px;height:275px"></div>
<div class="abs" style="left:675px;top:366px;width:16px;height:16px;background:#c1c1c1"></div><div class="abs" style="left:675px;top:609px;width:16px;height:32px;background:#c1c1c1"></div>
<div class="sb" style="left:675px;top:366px"><svg width="14" height="14" style="position:absolute;left:0;top:0"><polygon points="3,9 11,9 7,5" fill="#808080"/></svg></div>
<div class="sb" style="left:675px;top:609px"><svg width="14" height="14" style="position:absolute;left:0;top:0"><polygon points="3,9 11,9 7,5" fill="#808080"/></svg></div>
<div class="sb" style="left:675px;top:625px"><svg width="14" height="14" style="position:absolute;left:0;top:0"><polygon points="3,5.5 11,5.5 7,9.5" fill="#808080"/></svg></div>
<div class="abs" style="left:675px;top:529px;width:16px;height:19px;background:#c1c1c1"></div>
<div class="sb" style="left:675px;top:528px;height:21px"><svg width="14" height="19" style="position:absolute;left:0;top:0" shape-rendering="crispEdges"><rect x="2" y="4" width="1" height="1" fill="#8a8a8a"/><rect x="3" y="5" width="1" height="1" fill="#fff"/><rect x="6" y="4" width="1" height="1" fill="#8a8a8a"/><rect x="7" y="5" width="1" height="1" fill="#fff"/><rect x="10" y="4" width="1" height="1" fill="#8a8a8a"/><rect x="11" y="5" width="1" height="1" fill="#fff"/><rect x="2" y="8" width="1" height="1" fill="#8a8a8a"/><rect x="3" y="9" width="1" height="1" fill="#fff"/><rect x="6" y="8" width="1" height="1" fill="#8a8a8a"/><rect x="7" y="9" width="1" height="1" fill="#fff"/><rect x="10" y="8" width="1" height="1" fill="#8a8a8a"/><rect x="11" y="9" width="1" height="1" fill="#fff"/><rect x="2" y="12" width="1" height="1" fill="#8a8a8a"/><rect x="3" y="13" width="1" height="1" fill="#fff"/><rect x="6" y="12" width="1" height="1" fill="#8a8a8a"/><rect x="7" y="13" width="1" height="1" fill="#fff"/><rect x="10" y="12" width="1" height="1" fill="#8a8a8a"/><rect x="11" y="13" width="1" height="1" fill="#fff"/></svg></div>
<div class="chk" style="left:15px;top:641px;width:660px;height:16px"></div>
<div class="abs" style="left:675px;top:641px;width:16px;height:16px;background:#c1c1c1"></div>
<div class="abs" style="left:15px;top:641px;width:16px;height:16px;background:#c1c1c1"></div><div class="abs" style="left:643px;top:641px;width:32px;height:16px;background:#c1c1c1"></div>
<div class="sb" style="left:15px;top:641px"><svg width="14" height="14" style="position:absolute;left:0;top:0"><polygon points="8.5,3 8.5,11 4.5,7" fill="#808080"/></svg></div>
<div class="sb" style="left:643px;top:641px"><svg width="14" height="14" style="position:absolute;left:0;top:0"><polygon points="8.5,3 8.5,11 4.5,7" fill="#808080"/></svg></div>
<div class="sb" style="left:659px;top:641px"><svg width="14" height="14" style="position:absolute;left:0;top:0"><polygon points="5.5,3 5.5,11 9.5,7" fill="#808080"/></svg></div>
<div class="abs" style="left:31px;top:641px;width:303px;height:16px;background:#c1c1c1"></div>
<div class="sb" style="left:31px;top:641px;width:304px;background:linear-gradient(#cacaca,#b4b4b4)"><svg width="20" height="14" style="position:absolute;left:141px;top:0" shape-rendering="crispEdges"><rect x="1" y="2" width="1" height="1" fill="#8a8a8a"/><rect x="2" y="3" width="1" height="1" fill="#fff"/><rect x="5" y="2" width="1" height="1" fill="#8a8a8a"/><rect x="6" y="3" width="1" height="1" fill="#fff"/><rect x="9" y="2" width="1" height="1" fill="#8a8a8a"/><rect x="10" y="3" width="1" height="1" fill="#fff"/><rect x="13" y="2" width="1" height="1" fill="#8a8a8a"/><rect x="14" y="3" width="1" height="1" fill="#fff"/><rect x="17" y="2" width="1" height="1" fill="#8a8a8a"/><rect x="18" y="3" width="1" height="1" fill="#fff"/><rect x="1" y="6" width="1" height="1" fill="#8a8a8a"/><rect x="2" y="7" width="1" height="1" fill="#fff"/><rect x="5" y="6" width="1" height="1" fill="#8a8a8a"/><rect x="6" y="7" width="1" height="1" fill="#fff"/><rect x="9" y="6" width="1" height="1" fill="#8a8a8a"/><rect x="10" y="7" width="1" height="1" fill="#fff"/><rect x="13" y="6" width="1" height="1" fill="#8a8a8a"/><rect x="14" y="7" width="1" height="1" fill="#fff"/><rect x="17" y="6" width="1" height="1" fill="#8a8a8a"/><rect x="18" y="7" width="1" height="1" fill="#fff"/><rect x="1" y="10" width="1" height="1" fill="#8a8a8a"/><rect x="2" y="11" width="1" height="1" fill="#fff"/><rect x="5" y="10" width="1" height="1" fill="#8a8a8a"/><rect x="6" y="11" width="1" height="1" fill="#fff"/><rect x="9" y="10" width="1" height="1" fill="#8a8a8a"/><rect x="10" y="11" width="1" height="1" fill="#fff"/><rect x="13" y="10" width="1" height="1" fill="#8a8a8a"/><rect x="14" y="11" width="1" height="1" fill="#fff"/><rect x="17" y="10" width="1" height="1" fill="#8a8a8a"/><rect x="18" y="11" width="1" height="1" fill="#fff"/></svg></div>
</div>
</body></html>
